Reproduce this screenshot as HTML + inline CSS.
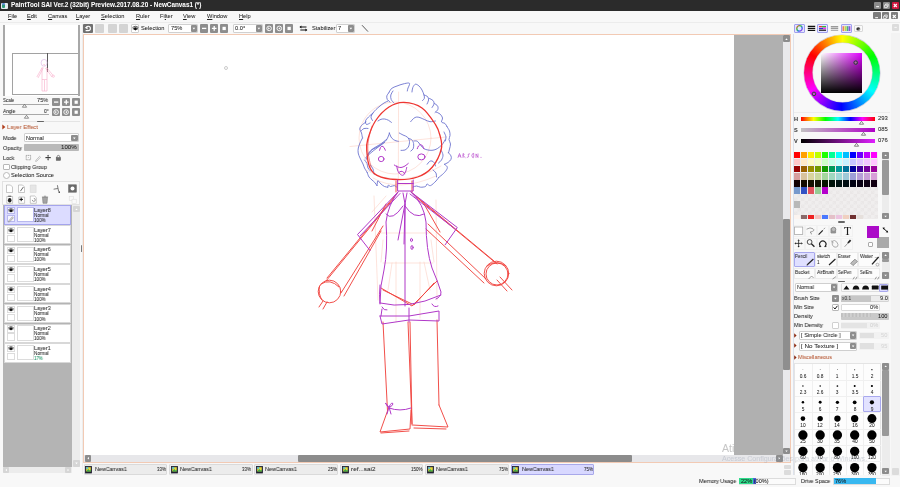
<!DOCTYPE html>
<html><head><meta charset="utf-8"><title>PaintTool SAI</title>
<style>
*{box-sizing:border-box;margin:0;padding:0}
html,body{width:900px;height:487px;overflow:hidden;background:#f8f8f8;font-family:"Liberation Sans","DejaVu Sans",sans-serif;font-size:5.7px;color:#222}
.a{position:absolute}
.t{position:absolute;white-space:nowrap;line-height:1;will-change:transform;-webkit-text-stroke:.04px currentColor}
.gb{position:absolute;background:#8d8d8d;border-radius:1px}
.lb{position:absolute;background:#d4d4d4;border-radius:1px}
svg{overflow:visible}
u{text-decoration-thickness:.5px;text-underline-offset:.6px}
</style></head><body>
<div class="a" style="left:0px;top:0px;width:900px;height:10.6px;background:#2b2b2b;"></div>
<div class="a" style="left:1.2px;top:2.8px;width:6.8px;height:6px;background:#e4ecf0;border-radius:1px"></div>
<div class="a" style="left:2px;top:4.2px;width:2.6px;height:3.6px;background:#2e9a7a;border-radius:1px"></div>
<div class="a" style="left:2.2px;top:3.3px;width:3px;height:1.4px;background:#5a8ad0;border-radius:1px"></div>
<div class="t" style="left:10.8px;top:2.3px;font-size:6.35px;font-weight:bold;color:#fff">PaintTool SAI Ver.2 (32bit) Preview.2017.08.20 - NewCanvas1 (*)</div>
<div class="a" style="left:874px;top:1.5px;width:7.2px;height:7.4px;background:#8a8a8a;border-radius:1px"></div>
<div class="a" style="left:883px;top:1.5px;width:7.2px;height:7.4px;background:#8a8a8a;border-radius:1px"></div>
<div class="a" style="left:892px;top:1.5px;width:7.2px;height:7.4px;background:#cf1840;border-radius:1px"></div>
<svg class="a" style="left:874px;top:2px;" width="25" height="7" viewBox="0 0 25 7"><path d="M2.200 4.700h2.800" stroke="#fff" stroke-width="1" fill="none"/><path d="M10.600 3.200h2.600v2.400h-2.600z M11.600 3v-1h2.600v2.400h-1" stroke="#fff" stroke-width=".7" fill="none"/><path d="M19.800 2l3 3M22.800 2l-3 3" stroke="#fff" stroke-width="1.100" fill="none"/></svg>
<div class="a" style="left:0px;top:10.6px;width:900px;height:12.4px;background:#f8f8f8;"></div>
<div class="a" style="left:0px;top:22px;width:900px;height:1px;background:#ececec;"></div>
<div class="t" style="left:8px;top:14px;"><u>F</u>ile</div>
<div class="t" style="left:27px;top:14px;"><u>E</u>dit</div>
<div class="t" style="left:48px;top:14px;"><u>C</u>anvas</div>
<div class="t" style="left:76px;top:14px;"><u>L</u>ayer</div>
<div class="t" style="left:101px;top:14px;"><u>S</u>election</div>
<div class="t" style="left:136px;top:14px;"><u>R</u>uler</div>
<div class="t" style="left:160px;top:14px;">Fi<u>l</u>ter</div>
<div class="t" style="left:183px;top:14px;"><u>V</u>iew</div>
<div class="t" style="left:207px;top:14px;"><u>W</u>indow</div>
<div class="t" style="left:239px;top:14px;"><u>H</u>elp</div>
<div class="a" style="left:873.3px;top:12.3px;width:7.3px;height:7.2px;background:#7c7c7c;border-radius:1px"></div>
<div class="a" style="left:882.1999999999999px;top:12.3px;width:7.3px;height:7.2px;background:#7c7c7c;border-radius:1px"></div>
<div class="a" style="left:891.0999999999999px;top:12.3px;width:7.3px;height:7.2px;background:#7c7c7c;border-radius:1px"></div>
<svg class="a" style="left:873.4px;top:12.5px;" width="25" height="7" viewBox="0 0 25 7"><path d="M2.200 4.700h2.800" stroke="#fff" stroke-width="1" fill="none"/><path d="M10.600 3.200h2.600v2.400h-2.600z M11.600 3v-1h2.600v2.400h-1" stroke="#fff" stroke-width=".7" fill="none"/><path d="M19.800 2l3 3M22.800 2l-3 3" stroke="#fff" stroke-width="1.100" fill="none"/></svg>
<div class="a" style="left:3px;top:25px;width:77px;height:71.3px;background:#ffffff;"></div>
<div class="a" style="left:3px;top:25px;width:1.6px;height:71.3px;background:#a8a8a8;"></div>
<div class="a" style="left:77.6px;top:25px;width:2px;height:71.3px;background:#a8a8a8;"></div>
<div class="a" style="left:12.3px;top:53px;width:66px;height:42px;background:transparent;border:.8px solid #a2a2a2;border-right:none"></div>
<div class="a" style="left:47.1px;top:53px;width:0.9px;height:19px;background:#5a5a5a;"></div>
<svg class="a" style="left:30px;top:55px;" width="30" height="40" viewBox="0 0 30 40"><g fill="none" stroke="#f8a4c4" stroke-width=".55"><ellipse cx="14.100" cy="7.800" rx="3" ry="3.400" stroke="#d4a8e0"/><path d="M12.600 11.800L6.800 22M13.400 12.600L8 23M16 11.800l7 8.500M15.400 13l6.600 9M12 13v23M17 13v23M12 24.500h5M12 36h5M14.500 25v11" /><circle cx="23.300" cy="21.200" r="1.100"/><path d="M13.600 9.500q.6 1 1.200 0" stroke="#f26a8a"/></g></svg>
<div class="t" style="left:3px;top:98px;font-size:5.7px;transform:scaleX(0.792);transform-origin:0 0;">Scale</div>
<div class="t" style="left:37.4px;top:98px;font-size:5.7px;transform:scaleX(0.973);transform-origin:0 0;">75%</div>
<div class="a" style="left:3px;top:103.7px;width:45.5px;height:0.8px;background:#a8a8a8;"></div>
<svg class="a" style="left:21.5px;top:104.3px;" width="5" height="3.5" viewBox="0 0 5 3.5"><path d="M2.5 .3L4.6 3.2H.4z" fill="#fff" stroke="#444" stroke-width=".6"/></svg>
<div class="t" style="left:3px;top:108.6px;font-size:5.7px;transform:scaleX(0.844);transform-origin:0 0;">Angle</div>
<div class="t" style="left:43.8px;top:108.6px;font-size:5.7px;transform:scaleX(0.862);transform-origin:0 0;">0&deg;</div>
<div class="a" style="left:3px;top:114.3px;width:45.5px;height:0.8px;background:#a8a8a8;"></div>
<svg class="a" style="left:23.5px;top:114.9px;" width="5" height="3.5" viewBox="0 0 5 3.5"><path d="M2.5 .3L4.6 3.2H.4z" fill="#fff" stroke="#444" stroke-width=".6"/></svg>
<div class="a" style="left:51.7px;top:97.5px;width:8.3px;height:8.2px;background:#8d8d8d;border-radius:1px"></div>
<div class="a" style="left:51.7px;top:108.2px;width:8.3px;height:8.2px;background:#8d8d8d;border-radius:1px"></div>
<div class="a" style="left:61.7px;top:97.5px;width:8.3px;height:8.2px;background:#8d8d8d;border-radius:1px"></div>
<div class="a" style="left:61.7px;top:108.2px;width:8.3px;height:8.2px;background:#8d8d8d;border-radius:1px"></div>
<div class="a" style="left:71.7px;top:97.5px;width:8.3px;height:8.2px;background:#8d8d8d;border-radius:1px"></div>
<div class="a" style="left:71.7px;top:108.2px;width:8.3px;height:8.2px;background:#8d8d8d;border-radius:1px"></div>
<svg class="a" style="left:51.7px;top:97.5px;" width="30" height="8.2" viewBox="0 0 30 8.2"><path d="M2 4.1h4.3" stroke="#fff" stroke-width="1.3"/><path d="M12 4.1h4.6M14.3 1.8v4.6" stroke="#fff" stroke-width="1.3"/><rect x="22.6" y="2.6" width="3.2" height="3.2" fill="#fff"/></svg>
<svg class="a" style="left:51.7px;top:108.2px;" width="30" height="8.2" viewBox="0 0 30 8.2"><circle cx="4.1" cy="4.1" r="2.3" fill="none" stroke="#fff" stroke-width=".9"/><path d="M3.2 3l1.8 1.1-1.8 1.1z" fill="#fff"/><circle cx="14.1" cy="4.1" r="2.3" fill="none" stroke="#fff" stroke-width=".9"/><path d="M15 3l-1.8 1.1 1.8 1.1z" fill="#fff"/><rect x="22.6" y="2.6" width="3.2" height="3.2" fill="#fff"/></svg>
<div class="a" style="left:2px;top:121.3px;width:78px;height:0.8px;background:#e4e4e4;"></div>
<div class="a" style="left:37px;top:120.8px;width:7px;height:1.5px;background:#666;border-radius:1px"></div>
<svg class="a" style="left:2px;top:124px;" width="4" height="6" viewBox="0 0 4 6"><path d="M.3 .5L3.4 3 .3 5.5z" fill="#b03a18"/></svg>
<div class="t" style="left:6.8px;top:123.6px;font-size:6.2px;transform:scaleX(0.940);transform-origin:0 0;color:#b5542f">Layer Effect</div>
<div class="t" style="left:3px;top:135.5px;font-size:5.7px;transform:scaleX(0.947);transform-origin:0 0;">Mode</div>
<div class="a" style="left:24.2px;top:133.3px;width:54.4px;height:9px;background:#fff;border:1px solid #d0d0d0;border-radius:1px"></div>
<div class="t" style="left:26.1px;top:135.8px;font-size:5.2px;transform:scaleX(1.068);transform-origin:0 0;">Normal</div>
<div class="a" style="left:71px;top:134.6px;width:6.6px;height:6.5px;background:#8d8d8d;border-radius:1px"></div>
<svg class="a" style="left:71px;top:134.6px;" width="6.6" height="6.5" viewBox="0 0 6.6 6.5"><path d="M2 2.5h2.6L3.3 4.3z" fill="#fff"/></svg>
<div class="t" style="left:3px;top:145.5px;font-size:5.7px;transform:scaleX(0.968);transform-origin:0 0;">Opacity</div>
<div class="a" style="left:24px;top:144px;width:54.5px;height:7.2px;background:#b9b9b9;border-radius:1px"></div>
<div class="t" style="left:61px;top:145.3px;font-size:5.7px;transform:scaleX(1.084);transform-origin:0 0;">100%</div>
<div class="t" style="left:3px;top:155.5px;font-size:5.7px;transform:scaleX(0.939);transform-origin:0 0;">Lock</div>
<svg class="a" style="left:25px;top:154px;" width="40" height="8" viewBox="0 0 40 8"><g fill="none" stroke="#8c8c8c" stroke-width=".75"><rect x="1.200" y="1.400" width="4.400" height="4.400" stroke-dasharray="1.300 .500"/><circle cx="3.400" cy="3.600" r=".500" fill="#bbb" stroke="none"/><path d="M11 6.200l3.600-3.900.900.900-3.600 3.900-1.300.300z" stroke="#a0a0a0" stroke-width=".6"/><path d="M20.400 3.600h5.400" stroke="#3c3c3c" stroke-width="1.150"/><path d="M23.100 1.300v4.800" stroke="#3c3c3c" stroke-width=".8"/><path d="M23.100 .700l.900 1.100h-1.800zM23.100 6.600l.900-1.100h-1.800z" fill="#3c3c3c" stroke="none"/><rect x="31.200" y="3.500" width="4.400" height="2.900" fill="#6c6c6c" stroke="#5a5a5a" stroke-width=".5"/><path d="M32.100 3.500v-.800a1.300 1.300 0 012.600 0v.800" stroke="#5a5a5a" stroke-width=".7"/></g></svg>
<div class="a" style="left:3px;top:163.8px;width:6.5px;height:6.5px;background:#fff;border:1px solid #b8b8b8;border-radius:1px"></div>
<div class="t" style="left:11.2px;top:165.1px;font-size:5.7px;transform:scaleX(0.949);transform-origin:0 0;">Clipping Group</div>
<div class="a" style="left:3px;top:172.3px;width:7px;height:7px;background:#fff;border:1px solid #b8b8b8;border-radius:50%"></div>
<div class="t" style="left:11.2px;top:173.1px;font-size:5.7px;transform:scaleX(0.998);transform-origin:0 0;">Selection Source</div>
<div class="a" style="left:1.5px;top:180.5px;width:78.5px;height:24.5px;background:#fafafa;border:1px solid #e2e2e2"></div>
<svg class="a" style="left:5px;top:184px;" width="74" height="20" viewBox="0 0 74 20"><g fill="none" stroke="#9a9a9a" stroke-width=".55">
<path d="M1.5 1h4l2 2v5.500h-6z" fill="#fff"/>
<path d="M13.500 1h4l2 2v5.500h-6z" fill="#fff"/><path d="M15.400 7.200l3-4.200" stroke="#444" stroke-width=".8"/>
<path d="M25.300 1h5.800v7.500h-5.800z" fill="#e6e6e6" stroke="#d4d4d4"/>
<path d="M48.600 5.200l4.200-.7M52.400 1.200l1.200 6.200" stroke="#444" stroke-width=".7"/><rect x="53.600" y="7.500" width="1.300" height="1.300" fill="#111" stroke="none"/>
<rect x="63.600" y=".800" width="7.800" height="7.400" fill="#6a6a6a" stroke="#666"/><circle cx="67.500" cy="4.500" r="2" fill="#fff" stroke="none"/>
<path d="M1.800 12.500h5.800v6.800h-5.800z" fill="#fff"/><ellipse cx="4.700" cy="16.200" rx="1.800" ry="2.200" fill="#222" stroke="none"/><path d="M3.200 12.200h3" stroke="#333" stroke-width=".8"/>
<path d="M13.800 13h5.800v6.300h-5.800z" fill="#fff"/><path d="M16.200 13.600v3.600M14.400 15.400h3.600" stroke="#111" stroke-width="1"/>
<path d="M25.300 12h4.400l1.600 1.600v5.700h-6z" fill="#fff"/><path d="M28.800 14.400a1.500 1.500 0 11-1.500 1.500" stroke="#555"/>
<path d="M37.500 13.400h5l-.5 5.900h-4z" fill="#a4a4a4" stroke="#777"/><path d="M36.900 13h6.200M38.900 12.200h2.200" stroke="#666"/>
<rect x="64.200" y="12.400" width="4.200" height="4.200" stroke="#dcdcdc"/><rect x="67" y="15.200" width="4.200" height="4.200" stroke="#dcdcdc" fill="#fafafa"/>
</g></svg>
<div class="a" style="left:2.5px;top:205px;width:69px;height:261.5px;background:#b4b4b4;"></div>
<div class="a" style="left:4px;top:205.3px;width:66.6px;height:19.4px;background:#dcdcff;border:1px solid #a4a4ec"></div>
<div class="a" style="left:7px;top:207.10000000000002px;width:8px;height:7.3px;background:#f4f4ff;border:1px solid #b8b8ee"></div>
<div class="a" style="left:7px;top:215.20000000000002px;width:8px;height:7.3px;background:#f4f4ff;border:1px solid #b8b8ee"></div>
<svg class="a" style="left:7px;top:207.10000000000002px;" width="8" height="7.3" viewBox="0 0 8 7.3"><path d="M1.6 3.8Q4 1.6 6.4 3.8Q4 6 1.6 3.8z" fill="#fff" stroke="#222" stroke-width=".6"/><circle cx="4" cy="3.8" r="1.3" fill="#111"/><path d="M1.4 2.6Q4 .6 6.6 2.6" fill="none" stroke="#222" stroke-width=".7"/></svg>
<svg class="a" style="left:7px;top:215.20000000000002px;" width="8" height="7.3" viewBox="0 0 8 7.3"><path d="M1.8 5.8l3.6-4 1 .9-3.6 4-1.3.4z" fill="#ddd" stroke="#777" stroke-width=".5"/></svg>
<div class="a" style="left:17px;top:207.10000000000002px;width:16.5px;height:15.4px;background:#fff;border:1px solid #b8b8ee"></div>
<div class="t" style="left:34.2px;top:207.8px;font-size:5.9px;transform:scaleX(0.926);transform-origin:0 0;">Layer8</div>
<div class="t" style="left:34.2px;top:213.9px;font-size:4.7px;transform:scaleX(0.964);transform-origin:0 0;">Normal</div>
<div class="t" style="left:34.2px;top:219.0px;font-size:4.7px;transform:scaleX(0.965);transform-origin:0 0;">100%</div>
<div class="a" style="left:4px;top:225.0px;width:66.6px;height:19.4px;background:#ffffff;border:1px solid #d8d8d8"></div>
<div class="a" style="left:7px;top:226.8px;width:8px;height:7.3px;background:#fff;border:1px solid #dcdcdc"></div>
<div class="a" style="left:7px;top:234.9px;width:8px;height:7.3px;background:#fff;border:1px solid #dcdcdc"></div>
<svg class="a" style="left:7px;top:226.8px;" width="8" height="7.3" viewBox="0 0 8 7.3"><path d="M1.6 3.8Q4 1.6 6.4 3.8Q4 6 1.6 3.8z" fill="#fff" stroke="#222" stroke-width=".6"/><circle cx="4" cy="3.8" r="1.3" fill="#111"/><path d="M1.4 2.6Q4 .6 6.6 2.6" fill="none" stroke="#222" stroke-width=".7"/></svg>
<div class="a" style="left:17px;top:226.8px;width:16.5px;height:15.4px;background:#fff;border:1px solid #dcdcdc"></div>
<div class="t" style="left:34.2px;top:227.5px;font-size:5.9px;transform:scaleX(0.926);transform-origin:0 0;">Layer7</div>
<div class="t" style="left:34.2px;top:233.6px;font-size:4.7px;transform:scaleX(0.964);transform-origin:0 0;">Normal</div>
<div class="t" style="left:34.2px;top:238.7px;font-size:4.7px;transform:scaleX(0.965);transform-origin:0 0;">100%</div>
<div class="a" style="left:4px;top:244.70000000000002px;width:66.6px;height:19.4px;background:#ffffff;border:1px solid #d8d8d8"></div>
<div class="a" style="left:7px;top:246.50000000000003px;width:8px;height:7.3px;background:#fff;border:1px solid #dcdcdc"></div>
<div class="a" style="left:7px;top:254.60000000000002px;width:8px;height:7.3px;background:#fff;border:1px solid #dcdcdc"></div>
<svg class="a" style="left:7px;top:246.50000000000003px;" width="8" height="7.3" viewBox="0 0 8 7.3"><path d="M1.6 3.8Q4 1.6 6.4 3.8Q4 6 1.6 3.8z" fill="#fff" stroke="#222" stroke-width=".6"/><circle cx="4" cy="3.8" r="1.3" fill="#111"/><path d="M1.4 2.6Q4 .6 6.6 2.6" fill="none" stroke="#222" stroke-width=".7"/></svg>
<div class="a" style="left:17px;top:246.50000000000003px;width:16.5px;height:15.4px;background:#fff;border:1px solid #dcdcdc"></div>
<div class="t" style="left:34.2px;top:247.20000000000002px;font-size:5.9px;transform:scaleX(0.926);transform-origin:0 0;">Layer6</div>
<div class="t" style="left:34.2px;top:253.3px;font-size:4.7px;transform:scaleX(0.964);transform-origin:0 0;">Normal</div>
<div class="t" style="left:34.2px;top:258.40000000000003px;font-size:4.7px;transform:scaleX(0.965);transform-origin:0 0;">100%</div>
<div class="a" style="left:4px;top:264.4px;width:66.6px;height:19.4px;background:#ffffff;border:1px solid #d8d8d8"></div>
<div class="a" style="left:7px;top:266.2px;width:8px;height:7.3px;background:#fff;border:1px solid #dcdcdc"></div>
<div class="a" style="left:7px;top:274.29999999999995px;width:8px;height:7.3px;background:#fff;border:1px solid #dcdcdc"></div>
<svg class="a" style="left:7px;top:266.2px;" width="8" height="7.3" viewBox="0 0 8 7.3"><path d="M1.6 3.8Q4 1.6 6.4 3.8Q4 6 1.6 3.8z" fill="#fff" stroke="#222" stroke-width=".6"/><circle cx="4" cy="3.8" r="1.3" fill="#111"/><path d="M1.4 2.6Q4 .6 6.6 2.6" fill="none" stroke="#222" stroke-width=".7"/></svg>
<div class="a" style="left:17px;top:266.2px;width:16.5px;height:15.4px;background:#fff;border:1px solid #dcdcdc"></div>
<div class="t" style="left:34.2px;top:266.9px;font-size:5.9px;transform:scaleX(0.926);transform-origin:0 0;">Layer5</div>
<div class="t" style="left:34.2px;top:273.0px;font-size:4.7px;transform:scaleX(0.964);transform-origin:0 0;">Normal</div>
<div class="t" style="left:34.2px;top:278.09999999999997px;font-size:4.7px;transform:scaleX(0.965);transform-origin:0 0;">100%</div>
<div class="a" style="left:4px;top:284.1px;width:66.6px;height:19.4px;background:#ffffff;border:1px solid #d8d8d8"></div>
<div class="a" style="left:7px;top:285.90000000000003px;width:8px;height:7.3px;background:#fff;border:1px solid #dcdcdc"></div>
<div class="a" style="left:7px;top:294.0px;width:8px;height:7.3px;background:#fff;border:1px solid #dcdcdc"></div>
<svg class="a" style="left:7px;top:285.90000000000003px;" width="8" height="7.3" viewBox="0 0 8 7.3"><path d="M1.6 3.8Q4 1.6 6.4 3.8Q4 6 1.6 3.8z" fill="#fff" stroke="#222" stroke-width=".6"/><circle cx="4" cy="3.8" r="1.3" fill="#111"/><path d="M1.4 2.6Q4 .6 6.6 2.6" fill="none" stroke="#222" stroke-width=".7"/></svg>
<div class="a" style="left:17px;top:285.90000000000003px;width:16.5px;height:15.4px;background:#fff;border:1px solid #dcdcdc"></div>
<div class="t" style="left:34.2px;top:286.6px;font-size:5.9px;transform:scaleX(0.926);transform-origin:0 0;">Layer4</div>
<div class="t" style="left:34.2px;top:292.70000000000005px;font-size:4.7px;transform:scaleX(0.964);transform-origin:0 0;">Normal</div>
<div class="t" style="left:34.2px;top:297.8px;font-size:4.7px;transform:scaleX(0.965);transform-origin:0 0;">100%</div>
<div class="a" style="left:4px;top:303.8px;width:66.6px;height:19.4px;background:#ffffff;border:1px solid #d8d8d8"></div>
<div class="a" style="left:7px;top:305.6px;width:8px;height:7.3px;background:#fff;border:1px solid #dcdcdc"></div>
<div class="a" style="left:7px;top:313.7px;width:8px;height:7.3px;background:#fff;border:1px solid #dcdcdc"></div>
<svg class="a" style="left:7px;top:305.6px;" width="8" height="7.3" viewBox="0 0 8 7.3"><path d="M1.6 3.8Q4 1.6 6.4 3.8Q4 6 1.6 3.8z" fill="#fff" stroke="#222" stroke-width=".6"/><circle cx="4" cy="3.8" r="1.3" fill="#111"/><path d="M1.4 2.6Q4 .6 6.6 2.6" fill="none" stroke="#222" stroke-width=".7"/></svg>
<div class="a" style="left:17px;top:305.6px;width:16.5px;height:15.4px;background:#fff;border:1px solid #dcdcdc"></div>
<div class="t" style="left:34.2px;top:306.3px;font-size:5.9px;transform:scaleX(0.926);transform-origin:0 0;">Layer3</div>
<div class="t" style="left:34.2px;top:312.40000000000003px;font-size:4.7px;transform:scaleX(0.964);transform-origin:0 0;">Normal</div>
<div class="t" style="left:34.2px;top:317.5px;font-size:4.7px;transform:scaleX(0.965);transform-origin:0 0;">100%</div>
<div class="a" style="left:4px;top:323.5px;width:66.6px;height:19.4px;background:#ffffff;border:1px solid #d8d8d8"></div>
<div class="a" style="left:7px;top:325.3px;width:8px;height:7.3px;background:#fff;border:1px solid #dcdcdc"></div>
<div class="a" style="left:7px;top:333.4px;width:8px;height:7.3px;background:#fff;border:1px solid #dcdcdc"></div>
<svg class="a" style="left:7px;top:325.3px;" width="8" height="7.3" viewBox="0 0 8 7.3"><path d="M1.6 3.8Q4 1.6 6.4 3.8Q4 6 1.6 3.8z" fill="#fff" stroke="#222" stroke-width=".6"/><circle cx="4" cy="3.8" r="1.3" fill="#111"/><path d="M1.4 2.6Q4 .6 6.6 2.6" fill="none" stroke="#222" stroke-width=".7"/></svg>
<div class="a" style="left:17px;top:325.3px;width:16.5px;height:15.4px;background:#fff;border:1px solid #dcdcdc"></div>
<div class="t" style="left:34.2px;top:326.0px;font-size:5.9px;transform:scaleX(0.926);transform-origin:0 0;">Layer2</div>
<div class="t" style="left:34.2px;top:332.1px;font-size:4.7px;transform:scaleX(0.964);transform-origin:0 0;">Normal</div>
<div class="t" style="left:34.2px;top:337.2px;font-size:4.7px;transform:scaleX(0.965);transform-origin:0 0;">100%</div>
<div class="a" style="left:4px;top:343.20000000000005px;width:66.6px;height:19.4px;background:#ffffff;border:1px solid #d8d8d8"></div>
<div class="a" style="left:7px;top:345.00000000000006px;width:8px;height:7.3px;background:#fff;border:1px solid #dcdcdc"></div>
<div class="a" style="left:7px;top:353.1px;width:8px;height:7.3px;background:#fff;border:1px solid #dcdcdc"></div>
<svg class="a" style="left:7px;top:345.00000000000006px;" width="8" height="7.3" viewBox="0 0 8 7.3"><path d="M1.6 3.8Q4 1.6 6.4 3.8Q4 6 1.6 3.8z" fill="#fff" stroke="#222" stroke-width=".6"/><circle cx="4" cy="3.8" r="1.3" fill="#111"/><path d="M1.4 2.6Q4 .6 6.6 2.6" fill="none" stroke="#222" stroke-width=".7"/></svg>
<div class="a" style="left:17px;top:345.00000000000006px;width:16.5px;height:15.4px;background:#fff;border:1px solid #dcdcdc"></div>
<div class="t" style="left:34.2px;top:345.70000000000005px;font-size:5.9px;transform:scaleX(0.926);transform-origin:0 0;">Layer1</div>
<div class="t" style="left:34.2px;top:351.80000000000007px;font-size:4.7px;transform:scaleX(0.964);transform-origin:0 0;">Normal</div>
<div class="t" style="left:34.2px;top:356.90000000000003px;font-size:4.7px;transform:scaleX(0.914);transform-origin:0 0;color:#0e8a5a">17%</div>
<div class="a" style="left:72.3px;top:205px;width:7.5px;height:261.5px;background:#ececec;"></div>
<div class="a" style="left:72.5px;top:205.5px;width:7px;height:6.5px;background:#d6d6d6;border-radius:1px"></div>
<svg class="a" style="left:72.5px;top:205.5px;" width="7" height="6.5" viewBox="0 0 7 6.5"><path d="M2.3 4l1.2-1.6L4.7 4z" fill="#fff"/></svg>
<div class="a" style="left:72.5px;top:460px;width:7px;height:6.5px;background:#d6d6d6;border-radius:1px"></div>
<svg class="a" style="left:72.5px;top:460px;" width="7" height="6.5" viewBox="0 0 7 6.5"><path d="M2.3 2.6l1.2 1.6 1.2-1.6z" fill="#fff"/></svg>
<div class="a" style="left:2.5px;top:466.8px;width:69px;height:6.6px;background:#ececec;"></div>
<div class="a" style="left:2.8px;top:467px;width:6.5px;height:6.2px;background:#d6d6d6;border-radius:1px"></div>
<div class="a" style="left:64.5px;top:467px;width:6.5px;height:6.2px;background:#d6d6d6;border-radius:1px"></div>
<svg class="a" style="left:2.8px;top:467px;" width="6.5" height="6.2" viewBox="0 0 6.5 6.2"><path d="M4 1.9L2.4 3.1 4 4.3z" fill="#fff"/></svg>
<svg class="a" style="left:64.5px;top:467px;" width="6.5" height="6.2" viewBox="0 0 6.5 6.2"><path d="M2.5 1.9l1.6 1.2-1.6 1.2z" fill="#fff"/></svg>
<div class="a" style="left:81.6px;top:24px;width:0.8px;height:450px;background:#ececec;"></div>
<div class="a" style="left:81.1px;top:245.3px;width:1.4px;height:6.8px;background:#7a7a7a;border-radius:.6px"></div>
<div class="a" style="left:83.3px;top:24.2px;width:9.5px;height:8.8px;background:#707070;border-radius:1px"></div>
<svg class="a" style="left:83.3px;top:24.2px;" width="9.5" height="8.8" viewBox="0 0 9.5 8.8"><path d="M3 4.3a2.2 2.2 0 112.2 2.3H2.6" fill="none" stroke="#fff" stroke-width="1.1"/><path d="M1.6 3.2h3v2.4z" fill="#fff"/></svg>
<div class="a" style="left:95px;top:24.2px;width:9.4px;height:8.8px;background:#d4d4d4;border-radius:1px"></div>
<div class="a" style="left:107.8px;top:24.2px;width:9.4px;height:8.8px;background:#d4d4d4;border-radius:1px"></div>
<div class="a" style="left:118.8px;top:24.2px;width:9.4px;height:8.8px;background:#d4d4d4;border-radius:1px"></div>
<div class="a" style="left:130.5px;top:24.2px;width:8.8px;height:8.8px;background:#fff;border:1px solid #cfcfcf;border-radius:1px"></div>
<svg class="a" style="left:130.5px;top:24.2px;" width="8.8" height="8.8" viewBox="0 0 8.8 8.8"><path d="M1.8 4.8Q4.4 2.4 7 4.8Q4.4 7 1.8 4.8z" fill="#fff" stroke="#222" stroke-width=".6"/><circle cx="4.4" cy="4.8" r="1.4" fill="#111"/><path d="M1.5 3.4Q4.4 1.2 7.3 3.4" fill="none" stroke="#222" stroke-width=".8"/></svg>
<div class="t" style="left:140.8px;top:25.8px;">Selection</div>
<div class="a" style="left:168.3px;top:24.2px;width:29.6px;height:8.8px;background:#fff;border:1px solid #d0d0d0;border-radius:1px"></div>
<div class="t" style="left:170.5px;top:25.8px;">75%</div>
<div class="a" style="left:191.3px;top:25.2px;width:5.8px;height:6.8px;background:#8d8d8d;border-radius:1px"></div>
<svg class="a" style="left:191.3px;top:25.2px;" width="5.8" height="6.8" viewBox="0 0 5.8 6.8"><path d="M1.6 2.7h2.6L2.9 4.5z" fill="#fff"/></svg>
<div class="a" style="left:200px;top:24.2px;width:8.3px;height:8.8px;background:#8d8d8d;border-radius:1px"></div>
<div class="a" style="left:210px;top:24.2px;width:8.3px;height:8.8px;background:#8d8d8d;border-radius:1px"></div>
<div class="a" style="left:220px;top:24.2px;width:8.3px;height:8.8px;background:#8d8d8d;border-radius:1px"></div>
<svg class="a" style="left:200px;top:24.2px;" width="30" height="8.8" viewBox="0 0 30 8.8"><path d="M2 4.4h4.3" stroke="#fff" stroke-width="1.3"/><path d="M11.9 4.4h4.6M14.2 2.1v4.6" stroke="#fff" stroke-width="1.3"/><rect x="22.5" y="2.8" width="3.3" height="3.3" fill="#fff"/></svg>
<div class="a" style="left:232.5px;top:24.2px;width:30px;height:8.8px;background:#fff;border:1px solid #d0d0d0;border-radius:1px"></div>
<div class="t" style="left:234.7px;top:25.8px;">0.0&deg;</div>
<div class="a" style="left:255.9px;top:25.2px;width:5.8px;height:6.8px;background:#8d8d8d;border-radius:1px"></div>
<svg class="a" style="left:255.9px;top:25.2px;" width="5.8" height="6.8" viewBox="0 0 5.8 6.8"><path d="M1.6 2.7h2.6L2.9 4.5z" fill="#fff"/></svg>
<div class="a" style="left:265px;top:24.2px;width:8.3px;height:8.8px;background:#8d8d8d;border-radius:1px"></div>
<div class="a" style="left:275.2px;top:24.2px;width:8.3px;height:8.8px;background:#8d8d8d;border-radius:1px"></div>
<div class="a" style="left:285px;top:24.2px;width:8.3px;height:8.8px;background:#8d8d8d;border-radius:1px"></div>
<svg class="a" style="left:265px;top:24.2px;" width="30" height="8.8" viewBox="0 0 30 8.8"><circle cx="4.1" cy="4.4" r="2.3" fill="none" stroke="#fff" stroke-width=".9"/><path d="M3.2 3.3l1.8 1.1-1.8 1.1z" fill="#fff"/><circle cx="14.3" cy="4.4" r="2.3" fill="none" stroke="#fff" stroke-width=".9"/><path d="M15.2 3.3l-1.8 1.1 1.8 1.1z" fill="#fff"/><rect x="22.5" y="2.8" width="3.3" height="3.3" fill="#fff"/></svg>
<svg class="a" style="left:298.5px;top:24.2px;" width="9" height="8.8" viewBox="0 0 9 8.8"><path d="M1.3 3h6.2M1.3 6h6.2" stroke="#111" stroke-width="1.1"/><path d="M.4 3l2-1.6v3.2zM8.4 6l-2-1.6v3.2z" fill="#111"/></svg>
<div class="t" style="left:311.7px;top:25.8px;">Stabilizer</div>
<div class="a" style="left:335.5px;top:24.2px;width:19.5px;height:8.8px;background:#fff;border:1px solid #d0d0d0;border-radius:1px"></div>
<div class="t" style="left:337.7px;top:25.8px;">7</div>
<div class="a" style="left:348.4px;top:25.2px;width:5.8px;height:6.8px;background:#8d8d8d;border-radius:1px"></div>
<svg class="a" style="left:348.4px;top:25.2px;" width="5.8" height="6.8" viewBox="0 0 5.8 6.8"><path d="M1.6 2.7h2.6L2.9 4.5z" fill="#fff"/></svg>
<svg class="a" style="left:361px;top:24.2px;" width="8" height="8.8" viewBox="0 0 8 8.8"><path d="M1 1.2l6 6.4" stroke="#333" stroke-width=".8"/></svg>
<div class="a" style="left:83px;top:34px;width:708px;height:429px;background:#ffffff;border:1px solid #f2cab4"></div>
<div class="a" style="left:734px;top:35px;width:49px;height:419.5px;background:#b0b0b0;"></div>
<div class="a" style="left:783px;top:35px;width:7px;height:427px;background:#e9e9eb;"></div>
<div class="a" style="left:783.2px;top:35.3px;width:6.6px;height:6.4px;background:#8d8d8d;border-radius:1px"></div>
<svg class="a" style="left:783.2px;top:35.5px;" width="7" height="6.4" viewBox="0 0 7 6.4"><path d="M2.3 3.9l1.2-1.6 1.2 1.6z" fill="#fff"/></svg>
<div class="a" style="left:783.2px;top:448px;width:6.6px;height:6.3px;background:#8d8d8d;border-radius:1px"></div>
<svg class="a" style="left:783.2px;top:448px;" width="7" height="6.4" viewBox="0 0 7 6.4"><path d="M2.3 2.5l1.2 1.6 1.2-1.6z" fill="#fff"/></svg>
<div class="a" style="left:783.2px;top:219.1px;width:6.7px;height:150.5px;background:#8e8e8e;border-radius:1px"></div>
<div class="a" style="left:84px;top:454.6px;width:699px;height:7.4px;background:#e7e7ea;"></div>
<div class="a" style="left:84.5px;top:455.3px;width:6.6px;height:6.4px;background:#8d8d8d;border-radius:1px"></div>
<svg class="a" style="left:84.5px;top:455.3px;" width="6.6" height="6.4" viewBox="0 0 6.6 6.4"><path d="M4 2L2.4 3.2 4 4.4z" fill="#fff"/></svg>
<div class="a" style="left:776.2px;top:455.3px;width:6.6px;height:6.4px;background:#8d8d8d;border-radius:1px"></div>
<svg class="a" style="left:776.2px;top:455.3px;" width="6.6" height="6.4" viewBox="0 0 6.6 6.4"><path d="M2.6 2l1.6 1.2-1.6 1.2z" fill="#fff"/></svg>
<div class="a" style="left:298px;top:455.3px;width:334px;height:6.4px;background:#8c8c8c;border-radius:1px"></div>
<div class="a" style="left:784px;top:464.5px;width:6.5px;height:4.8px;background:#dcdcdc;border-radius:1px"></div>
<div class="a" style="left:784px;top:470.3px;width:6.5px;height:4.8px;background:#dcdcdc;border-radius:1px"></div>
<svg class="a" style="left:0;top:0" width="900" height="487" viewBox="0 0 900 487" fill="none" stroke-linecap="round" stroke-linejoin="round">
<g stroke="#fbd0c4" stroke-width=".6">
<circle cx="395" cy="138" r="36"/>
<path d="M398.600 92L398.300 184M350 146.500L446 137M366 170Q400 190 441 166M373 178Q398 193 436 176"/>
<path d="M374 196L378 300M436 200L437 300M381 233h50M383 263h50M392 263L388 290M424 262L430 290M372 212l14-16"/>
<path d="M396 262v60M420 262v56M383 240L381 262M431 240L434 262"/>
</g>
<g stroke="#646ccc" stroke-width=".85">
<path d="M388.7 93.0C389.2 92.2 390.1 89.7 391.5 88.5C392.9 87.3 395.1 86.8 397.0 86.0C398.9 85.2 401.1 84.5 403.0 84.0C404.9 83.5 407.6 82.9 408.7 83.0C409.8 83.1 409.6 83.7 409.5 84.5C409.4 85.3 408.4 86.9 408.0 88.0C407.6 89.1 407.4 90.5 407.3 91.0"/>
<path d="M412.0 92.0C412.1 91.2 412.2 88.8 412.8 87.5C413.4 86.2 414.4 84.5 415.4 84.2C416.4 84.0 417.9 85.0 419.0 86.0C420.1 87.0 421.2 88.5 422.0 90.0C422.8 91.5 423.6 93.6 424.0 95.0C424.4 96.4 424.6 97.6 424.3 98.5C424.1 99.4 422.8 100.2 422.5 100.5"/>
<path d="M388.7 93.0C388.4 93.5 387.0 94.9 386.8 96.0C386.6 97.1 386.8 98.5 387.3 99.5C387.8 100.5 389.6 101.6 390.0 102.0"/>
<path d="M393.0 91.0C392.6 91.7 391.1 93.6 390.8 95.0C390.5 96.4 390.7 98.2 391.2 99.5C391.7 100.8 393.5 102.4 394.0 103.0"/>
<path d="M424.0 95.0C424.6 95.2 426.7 95.7 427.5 96.5C428.3 97.3 428.7 98.8 428.6 100.0C428.5 101.2 427.3 103.3 427.0 104.0"/>
<path d="M429.5 98.5C430.1 98.8 432.2 99.6 433.0 100.5C433.8 101.4 434.2 102.8 434.0 104.0C433.8 105.2 432.3 106.9 432.0 107.5"/>
<path d="M434.5 103.5C435.0 103.9 437.1 105.0 437.6 106.0C438.2 107.0 438.2 108.4 437.8 109.5C437.4 110.6 435.5 112.0 435.0 112.5"/>
<path d="M388.0 101.0C387.3 101.3 385.3 102.2 384.0 103.0C382.7 103.8 381.3 104.9 380.0 106.0C378.7 107.1 377.2 108.3 376.0 109.5C374.8 110.7 373.8 111.8 373.0 113.0C372.2 114.2 371.1 115.8 371.0 117.0C370.9 118.2 372.2 119.9 372.5 120.5"/>
<path d="M373.0 113.0C372.2 113.7 369.8 115.7 368.5 117.0C367.2 118.3 365.8 119.8 365.5 121.0C365.2 122.2 365.8 124.2 366.5 124.5C367.2 124.8 369.4 123.2 370.0 123.0"/>
<path d="M366.0 122.0C365.2 122.6 362.5 124.3 361.5 125.5C360.5 126.7 359.8 127.8 359.8 129.0C359.8 130.2 361.1 131.5 361.5 133.0C361.9 134.5 362.3 137.2 362.5 138.0"/>
<path d="M362.5 138.0C362.1 138.8 360.7 141.3 360.0 143.0C359.3 144.7 358.6 146.3 358.3 148.0C358.0 149.7 357.9 151.3 358.2 153.0C358.5 154.7 359.2 156.2 360.0 158.0C360.8 159.8 362.2 162.3 363.0 164.0C363.8 165.7 363.8 166.6 364.5 168.0C365.2 169.4 366.8 171.8 367.2 172.5"/>
<path d="M361.0 131.0C361.5 130.6 362.8 128.9 364.0 128.5C365.2 128.1 367.3 128.5 368.0 128.5"/>
<path d="M367.2 172.5C367.5 173.2 368.2 175.8 369.0 177.0C369.8 178.2 371.1 179.1 372.0 180.0C372.9 180.9 373.8 181.4 374.6 182.3C375.4 183.2 376.6 185.1 377.0 185.6"/>
<path d="M377.0 185.6C377.1 185.2 377.1 183.8 377.3 183.0C377.5 182.2 377.4 180.5 378.0 180.7C378.6 180.9 379.9 183.0 381.0 184.0C382.1 185.0 383.4 186.0 384.5 186.5C385.6 187.0 387.2 187.1 387.8 187.2"/>
<path d="M387.8 187.2C387.9 186.8 388.1 185.1 388.5 185.0C388.9 184.9 389.5 186.4 390.5 186.5C391.5 186.6 393.3 185.5 394.3 185.6C395.3 185.7 396.1 186.8 396.5 187.0"/>
<path d="M364.5 160.0C364.9 160.6 366.4 162.2 367.0 163.5C367.6 164.8 367.4 166.8 368.0 168.0C368.6 169.2 370.1 170.5 370.5 171.0"/>
<path d="M370.5 165.0C370.9 165.7 372.4 167.5 373.0 169.0C373.6 170.5 373.8 173.2 374.0 174.0"/>
<path d="M436.0 112.0C436.7 112.3 438.9 113.0 440.0 114.0C441.1 115.0 442.2 116.7 442.5 118.0C442.8 119.3 441.1 121.1 441.5 122.0C441.9 122.9 444.1 122.8 445.0 123.5C445.9 124.2 446.6 126.0 446.9 126.5"/>
<path d="M446.9 126.5C447.3 127.2 449.0 129.5 449.5 131.0C450.0 132.5 450.1 134.1 450.0 135.5C449.9 136.9 448.9 138.2 449.0 139.6C449.1 141.0 450.4 142.4 450.5 144.0C450.6 145.6 449.8 147.5 449.5 149.0C449.2 150.5 448.7 152.2 448.5 152.8"/>
<path d="M448.5 152.8C448.9 153.3 450.6 154.9 451.0 156.0C451.4 157.1 451.5 158.2 451.0 159.3C450.5 160.4 449.1 161.7 448.0 162.5C446.9 163.3 445.0 164.0 444.4 164.3"/>
<path d="M444.4 164.3C444.8 164.7 446.6 165.7 447.0 166.5C447.4 167.3 447.5 168.0 446.9 169.2C446.3 170.4 444.9 172.1 443.5 173.5C442.1 174.9 439.5 176.8 438.7 177.4"/>
<path d="M438.7 177.4C438.2 178.0 437.4 179.6 436.0 181.0C434.6 182.4 432.0 185.1 430.5 185.6C429.0 186.1 427.8 183.8 427.0 184.0C426.2 184.2 426.6 186.0 425.5 186.5C424.4 187.0 422.1 187.3 420.6 187.2C419.1 187.1 417.8 186.0 416.5 186.0C415.2 186.0 413.6 186.8 413.0 187.0"/>
<path d="M441.0 150.0C441.3 150.8 442.9 153.3 443.0 155.0C443.1 156.7 442.2 158.7 441.5 160.0C440.8 161.3 439.0 162.5 438.5 163.0"/>
<path d="M427.2 164.3C427.6 163.8 428.7 162.1 429.5 161.5C430.3 160.9 431.2 160.8 432.0 161.0C432.8 161.2 433.9 162.2 434.5 163.0C435.1 163.8 435.2 165.5 435.4 166.0"/>
<path d="M433.0 170.0C433.5 170.5 435.4 171.8 436.0 173.0C436.6 174.2 436.4 176.3 436.5 177.0"/>
<path d="M444.0 132.0C444.3 132.8 445.8 135.5 446.0 137.0C446.2 138.5 445.3 140.3 445.2 141.0"/>
<path d="M378.0 121.0C378.5 120.7 379.9 119.6 381.0 119.3C382.1 119.0 383.4 118.8 384.7 119.0C385.9 119.2 387.4 119.7 388.5 120.3C389.6 120.9 390.9 122.1 391.4 122.4"/>
<path d="M410.7 121.7C411.2 121.2 412.5 119.3 413.5 118.5C414.5 117.7 415.6 117.1 416.8 117.0C418.1 116.9 419.7 117.5 421.0 118.0C422.3 118.5 423.3 119.1 424.8 119.7C426.3 120.3 428.2 121.5 430.0 121.7C431.8 121.9 434.5 121.1 435.4 121.0"/>
<path d="M389.4 133.0C389.2 133.7 388.7 135.6 388.0 137.0C387.3 138.4 386.8 139.8 385.3 141.3C383.8 142.8 381.3 144.5 379.0 146.0C376.7 147.5 373.1 148.8 371.3 150.3C369.5 151.8 368.8 153.5 368.0 155.0C367.2 156.5 366.7 158.6 366.4 159.3"/>
<path d="M386.5 139.5C385.4 140.3 382.3 142.9 380.0 144.5C377.7 146.1 374.6 147.3 372.5 149.0C370.4 150.7 368.3 153.6 367.5 154.5"/>
<path d="M384.5 142.5C383.2 143.4 379.4 146.2 377.0 148.0C374.6 149.8 371.9 151.8 370.0 153.5C368.1 155.2 366.2 157.2 365.5 158.0"/>
<path d="M389.4 133.0C389.7 133.7 390.3 135.9 391.0 137.0C391.7 138.1 392.7 139.0 393.5 139.6C394.3 140.2 395.2 140.5 396.0 140.8C396.8 141.1 398.0 141.2 398.4 141.3"/>
<path d="M399.3 133.0C399.9 133.3 401.6 134.3 403.0 135.0C404.4 135.7 406.4 136.1 407.5 137.2C408.6 138.3 409.4 139.9 409.5 141.5C409.6 143.1 409.1 145.6 408.3 147.0C407.6 148.4 406.2 149.4 405.0 150.0C403.8 150.6 401.7 150.2 401.0 150.3"/>
<path d="M408.5 138.5C409.0 138.7 410.8 138.8 411.6 139.6C412.5 140.4 413.3 142.0 413.6 143.5C413.9 145.0 413.7 147.4 413.2 148.7C412.7 149.9 411.2 150.6 410.8 151.0"/>
<path d="M414.0 141.0C414.6 141.1 416.2 140.6 417.3 141.3C418.4 142.0 419.4 143.8 420.5 145.0C421.6 146.2 422.6 147.9 423.9 148.7C425.1 149.5 426.6 149.7 428.0 150.0C429.4 150.3 430.7 150.4 432.0 150.3C433.3 150.2 434.8 149.9 436.0 149.3C437.2 148.8 438.3 148.0 439.5 147.0C440.7 146.0 442.1 144.7 443.0 143.5C443.9 142.3 444.8 140.2 445.2 139.6"/>
</g>
<path d="M404.0 102.4C398.5 102.2 393.8 103.9 389.0 107.0C384.2 110.1 379.0 115.5 375.4 121.0C371.8 126.5 369.0 135.0 367.6 140.0C366.2 145.0 366.5 146.5 366.8 151.0C367.1 155.5 367.9 162.9 369.6 167.0C371.3 171.1 372.7 173.2 377.0 175.3C381.3 177.4 388.7 179.2 395.5 179.5C402.3 179.8 411.5 179.1 417.6 177.0C423.8 174.9 428.4 171.7 432.4 167.0C436.3 162.3 440.0 154.2 441.3 149.0C442.6 143.8 441.0 139.6 440.0 135.5C439.0 131.4 438.4 129.0 435.4 124.4C432.4 119.8 427.2 111.7 422.0 108.0C416.8 104.3 409.5 102.6 404.0 102.4z" stroke="#ee3632" stroke-width="1.3"/>
<path d="M372.0 126.0C371.4 128.3 369.2 135.7 368.5 140.0C367.8 144.3 367.6 147.5 368.0 152.0C368.4 156.5 370.5 164.5 371.0 167.0" stroke="#ee3a36" stroke-width=".6"/>
<g stroke="#f04640" stroke-width=".95">
<path d="M396 181v11M412 181v11"/>
<path d="M398 192L327 278M394 198L326 281M383 226L341 293M381 231L344 296M386 204L372 231"/>
<circle cx="329.500" cy="291.500" r="11.300"/><path d="M321 284Q330 278 339 287M319.500 286Q318 294 322 300M323 301l-4 6M327 302l-4 7"/>
<path d="M411 192L494 261M416 197L497 264M428 224L486 279M426 229L484 283M424 204L440 232"/>
<circle cx="496.500" cy="273.500" r="12.300"/><circle cx="497" cy="274" r="11"/><path d="M500 277l12 13M497 280l10 11M487 266Q496 259 506 266"/>
<path d="M381 288L412 306L437 281M383 290L412 304M414 305L434 283"/>
<path d="M383 322L387.500 411M408 322L412 424M410 322L412 424M437 320L439 405"/>
<path d="M387.500 411L380 432L410 429L411 410M412 425L448 427L439 405M381 433l28-2M414 428l32 1"/>
</g>
<g stroke="#b038c8" stroke-width="1">
<path d="M379.6 150.3C379.8 149.8 380.1 148.2 380.5 147.5C380.9 146.8 381.4 146.2 382.0 146.2C382.6 146.2 383.4 146.8 384.0 147.5C384.6 148.2 385.1 149.8 385.3 150.3"/>
<path d="M417.3 148.7C417.5 148.2 417.9 146.7 418.5 146.0C419.1 145.3 419.9 144.6 420.6 144.6C421.3 144.6 422.1 145.3 422.6 146.0C423.2 146.7 423.7 148.2 423.9 148.7"/>
<ellipse cx="381.200" cy="159" rx="2.800" ry="2.600"/><ellipse cx="421.400" cy="156.900" rx="3.600" ry="3"/>
<path d="M394.3 165.0C394.8 165.3 396.4 166.4 397.5 166.8C398.6 167.2 399.8 167.6 401.0 167.5C402.2 167.4 403.8 166.7 405.0 166.0C406.2 165.3 407.8 163.8 408.3 163.4"/>
<path d="M396.8 166.0C396.9 166.7 397.1 168.8 397.5 170.0C397.9 171.2 398.6 172.5 399.3 173.3C400.0 174.1 400.8 174.7 401.5 175.0C402.2 175.3 402.7 175.5 403.4 175.0C404.1 174.5 404.9 173.2 405.5 172.0C406.1 170.8 406.5 168.2 406.7 167.5"/>
<path d="M399.0 172.5C399.3 172.3 400.2 171.4 401.0 171.3C401.8 171.2 402.9 171.6 403.5 172.0C404.1 172.4 404.3 173.7 404.5 174.0"/>
<path d="M397.600 180L397.600 191L413.200 191L413.200 180M397.600 183.500h15.600"/>
<path d="M398 192L357.500 234.500L370 250.500M400 193.500L360 236M411 192L457.300 227.500L445.200 244.700M410 194L455 229"/>
<path d="M398 192Q388 205 386 222Q388 250 384 270Q380 285 380 303M411 192Q424 204 426 222Q426 250 432 268Q438 282 441 292Q441 297 436 299"/>
<path d="M380 303Q408 310 441 295M380 285Q379 295 380 304"/>
<path d="M386 214Q392 222 403 206M424 214Q414 220 405 206"/>
<path d="M403 193L405 204L398 240M407 193L405 204L404 244M405 204L405 306"/>
<ellipse cx="411.500" cy="240" rx="1" ry="1.600"/><ellipse cx="412" cy="247.500" rx="1.100" ry="2"/>
<path d="M380 316L382 324L409 320L439 321L439 311L409 316L380 316M382 309L381 316M409 308v14M382 307Q384 311 387 310M432 304Q434 308 438 306"/>
<path d="M388 406Q384 401 386 404Q388 408 389 407Q392 401 393 404Q391 408 389 407M389 407L387 414M389 407L391 414M389 408Q400 412 411 408"/>
<path d="M458 157.500l1.500-4 1.500 4M458.600 156h2M463 157.500v-4q2.400.4 0 2l2.200 2M469.600 153.800q-2.400 0-1.200 1.600t-1.200 2.100M472.500 153.800q-1.600 1.600 0 3.600t1.200-3.600zM476 157.500v-3.600l2 3.600v-3.600M481 157.300v.2" stroke-width=".6"/>
</g>
</svg>
<svg class="a" style="left:223px;top:65px;" width="6" height="6" viewBox="0 0 6 6"><circle cx="3" cy="3" r="1.500" fill="none" stroke="#999" stroke-width=".5"/></svg>
<div class="a" style="left:83.6px;top:464.3px;width:83.6px;height:10.5px;background:#ececec;border:1px solid #dadada;border-radius:1px"></div>
<svg class="a" style="left:85.3px;top:465.9px;" width="7" height="7.4" viewBox="0 0 7 7.4"><rect x=".4" y=".4" width="6.2" height="6.6" fill="#223" stroke="#223" stroke-width=".8"/><rect x="1.2" y="1.2" width="4.6" height="4.2" fill="#e8d838"/><path d="M1.2 5.4l2-2.4 1.4 1.4 1.2-1v2z" fill="#3aa84a"/><rect x="1.2" y="1.2" width="2" height="1.6" fill="#4ac0e8"/></svg>
<div class="t" style="left:94.6px;top:466.8px;font-size:5.6px;transform:scaleX(0.955);transform-origin:0 0;">NewCanvas1</div>
<div class="t" style="right:734.0px;top:467.5px;font-size:4.5px">33%</div>
<div class="a" style="left:169.0px;top:464.3px;width:83.6px;height:10.5px;background:#ececec;border:1px solid #dadada;border-radius:1px"></div>
<svg class="a" style="left:170.7px;top:465.9px;" width="7" height="7.4" viewBox="0 0 7 7.4"><rect x=".4" y=".4" width="6.2" height="6.6" fill="#223" stroke="#223" stroke-width=".8"/><rect x="1.2" y="1.2" width="4.6" height="4.2" fill="#e8d838"/><path d="M1.2 5.4l2-2.4 1.4 1.4 1.2-1v2z" fill="#3aa84a"/><rect x="1.2" y="1.2" width="2" height="1.6" fill="#4ac0e8"/></svg>
<div class="t" style="left:180.0px;top:466.8px;font-size:5.6px;transform:scaleX(0.955);transform-origin:0 0;">NewCanvas1</div>
<div class="t" style="right:648.6px;top:467.5px;font-size:4.5px">33%</div>
<div class="a" style="left:254.4px;top:464.3px;width:83.6px;height:10.5px;background:#ececec;border:1px solid #dadada;border-radius:1px"></div>
<svg class="a" style="left:256.1px;top:465.9px;" width="7" height="7.4" viewBox="0 0 7 7.4"><rect x=".4" y=".4" width="6.2" height="6.6" fill="#223" stroke="#223" stroke-width=".8"/><rect x="1.2" y="1.2" width="4.6" height="4.2" fill="#e8d838"/><path d="M1.2 5.4l2-2.4 1.4 1.4 1.2-1v2z" fill="#3aa84a"/><rect x="1.2" y="1.2" width="2" height="1.6" fill="#4ac0e8"/></svg>
<div class="t" style="left:265.4px;top:466.8px;font-size:5.6px;transform:scaleX(0.955);transform-origin:0 0;">NewCanvas1</div>
<div class="t" style="right:563.2px;top:467.5px;font-size:4.5px">25%</div>
<div class="a" style="left:339.80000000000007px;top:464.3px;width:83.6px;height:10.5px;background:#ececec;border:1px solid #dadada;border-radius:1px"></div>
<svg class="a" style="left:341.50000000000006px;top:465.9px;" width="7" height="7.4" viewBox="0 0 7 7.4"><rect x=".4" y=".4" width="6.2" height="6.6" fill="#223" stroke="#223" stroke-width=".8"/><rect x="1.2" y="1.2" width="4.6" height="4.2" fill="#e8d838"/><path d="M1.2 5.4l2-2.4 1.4 1.4 1.2-1v2z" fill="#3aa84a"/><rect x="1.2" y="1.2" width="2" height="1.6" fill="#4ac0e8"/></svg>
<div class="t" style="left:350.80000000000007px;top:466.8px;font-size:5.6px;transform:scaleX(1.141);transform-origin:0 0;">ref...sai2</div>
<div class="t" style="right:477.79999999999995px;top:467.5px;font-size:4.5px">150%</div>
<div class="a" style="left:425.20000000000005px;top:464.3px;width:83.6px;height:10.5px;background:#ececec;border:1px solid #dadada;border-radius:1px"></div>
<svg class="a" style="left:426.90000000000003px;top:465.9px;" width="7" height="7.4" viewBox="0 0 7 7.4"><rect x=".4" y=".4" width="6.2" height="6.6" fill="#223" stroke="#223" stroke-width=".8"/><rect x="1.2" y="1.2" width="4.6" height="4.2" fill="#e8d838"/><path d="M1.2 5.4l2-2.4 1.4 1.4 1.2-1v2z" fill="#3aa84a"/><rect x="1.2" y="1.2" width="2" height="1.6" fill="#4ac0e8"/></svg>
<div class="t" style="left:436.20000000000005px;top:466.8px;font-size:5.6px;transform:scaleX(0.955);transform-origin:0 0;">NewCanvas1</div>
<div class="t" style="right:392.4px;top:467.5px;font-size:4.5px">75%</div>
<div class="a" style="left:510.6px;top:464.3px;width:83.6px;height:10.5px;background:#d8d8ff;border:1px solid #a8a8ea;border-radius:1px"></div>
<svg class="a" style="left:512.3000000000001px;top:465.9px;" width="7" height="7.4" viewBox="0 0 7 7.4"><rect x=".4" y=".4" width="6.2" height="6.6" fill="#223" stroke="#223" stroke-width=".8"/><rect x="1.2" y="1.2" width="4.6" height="4.2" fill="#e8d838"/><path d="M1.2 5.4l2-2.4 1.4 1.4 1.2-1v2z" fill="#3aa84a"/><rect x="1.2" y="1.2" width="2" height="1.6" fill="#4ac0e8"/></svg>
<div class="t" style="left:521.6px;top:466.8px;font-size:5.6px;transform:scaleX(0.955);transform-origin:0 0;">NewCanvas1</div>
<div class="t" style="right:307.0px;top:467.5px;font-size:4.5px">75%</div>
<div class="a" style="left:794px;top:24px;width:11px;height:8.8px;background:#e4e4ff;border:1px solid #a0a0ee;border-radius:1px"></div>
<div class="a" style="left:817.3px;top:24px;width:11px;height:8.8px;background:#e4e4ff;border:1px solid #a0a0ee;border-radius:1px"></div>
<div class="a" style="left:840.7px;top:24px;width:11px;height:8.8px;background:#e4e4ff;border:1px solid #a0a0ee;border-radius:1px"></div>
<svg class="a" style="left:794px;top:24px;" width="11" height="8.8" viewBox="0 0 11 8.8"><defs><linearGradient id="cw" x1="0" y1="0" x2="1" y2="1"><stop offset="0" stop-color="#f33"/><stop offset=".35" stop-color="#3c3"/><stop offset=".7" stop-color="#36f"/><stop offset="1" stop-color="#c3c"/></linearGradient></defs><circle cx="5.5" cy="4.4" r="2.7" fill="none" stroke="url(#cw)" stroke-width="1.3"/></svg>
<svg class="a" style="left:807px;top:24px;" width="9" height="8.8" viewBox="0 0 9 8.8"><path d="M.8 2.4h7.4M.8 4.4h7.4M.8 6.4h7.4" stroke="#111" stroke-width="1.3"/></svg>
<svg class="a" style="left:817.3px;top:24px;" width="11" height="8.8" viewBox="0 0 11 8.8"><path d="M2 2.6h7" stroke="#e33" stroke-width="1.2"/><path d="M2 4.4h7" stroke="#33c" stroke-width="1.2"/><path d="M2 6.2h7" stroke="#111" stroke-width="1.2"/><path d="M5 2.6h4" stroke="#3b3" stroke-width="1.2"/><path d="M6 4.4h3" stroke="#e3e" stroke-width="1.2"/></svg>
<svg class="a" style="left:830px;top:24px;" width="9" height="8.8" viewBox="0 0 9 8.8"><path d="M.8 2.6h7.4M.8 4.4h7.4M.8 6.2h7.4" stroke="#9a9a9a" stroke-width="1.1"/></svg>
<svg class="a" style="left:840.7px;top:24px;" width="11" height="8.8" viewBox="0 0 11 8.8"><defs><linearGradient id="sw" x1="0" x2="1"><stop offset="0" stop-color="#e55"/><stop offset=".3" stop-color="#dd5"/><stop offset=".55" stop-color="#5c5"/><stop offset=".8" stop-color="#55d"/><stop offset="1" stop-color="#c5c"/></linearGradient></defs><rect x="1.6" y="2.2" width="7.8" height="4.8" fill="url(#sw)"/><path d="M3.5 2.2v4.8M5.5 2.2v4.8M7.5 2.2v4.8" stroke="#fff" stroke-width=".4"/></svg>
<div class="a" style="left:854px;top:24.6px;width:8.6px;height:7.8px;background:#fafafa;border:1px solid #d8d8d8;border-radius:1px"></div>
<svg class="a" style="left:854px;top:24.6px;" width="8.6" height="7.8" viewBox="0 0 8.6 7.8"><ellipse cx="4.3" cy="3.9" rx="2" ry="1.6" fill="#333"/><circle cx="5.3" cy="4.4" r=".8" fill="#999"/></svg>
<div class="a" style="left:891.6px;top:24px;width:7.4px;height:7.4px;background:#dcdcdc;border-radius:1px"></div>
<svg class="a" style="left:891.6px;top:24px;" width="7.4" height="7.4" viewBox="0 0 7.4 7.4"><path d="M2.4 3.4h2.4" stroke="#fff" stroke-width=".8"/></svg>
<div class="a" style="left:891px;top:33px;width:9px;height:443px;background:#f3f3f3;"></div>
<div class="a" style="left:803.8px;top:34.6px;width:76.6px;height:76.6px;border-radius:50%;background:conic-gradient(from 1deg,#ff0,#0f0 60deg,#0ff 120deg,#00f 180deg,#f0f 240deg,#f00 300deg,#ff0 360deg);box-shadow:0 0 0 .6px #c8c8d8"></div>
<div class="a" style="left:812.5px;top:43.300000000000004px;width:59.2px;height:59.2px;border-radius:50%;background:#f8f8f8;box-shadow:0 0 0 .6px #d0d0d8"></div>
<div class="a" style="left:821px;top:52.5px;width:41px;height:40px;background:linear-gradient(to bottom,rgba(0,0,0,0),#000),linear-gradient(to right,#fff,#e000ff)"></div>
<svg class="a" style="left:853px;top:60px;" width="6" height="6" viewBox="0 0 6 6"><circle cx="2.7" cy="2.6" r="1.8" fill="none" stroke="#1a5a1a" stroke-width=".9"/><circle cx="2.7" cy="2.6" r=".7" fill="#9c6"/></svg>
<svg class="a" style="left:811px;top:90.5px;" width="6" height="6" viewBox="0 0 6 6"><circle cx="3" cy="2.9" r="1.8" fill="none" stroke="#1a5a1a" stroke-width=".9"/><circle cx="3" cy="2.9" r=".7" fill="#9c6"/></svg>
<div class="a" style="left:793px;top:112.4px;width:97px;height:0.7px;background:#ededed;"></div>
<div class="t" style="left:794px;top:117.10000000000001px;font-size:5.6px;font-weight:bold;color:#333">H</div>
<div class="a" style="left:801px;top:116.9px;width:74.3px;height:4px;background:linear-gradient(to right,#f00,#ff0 17%,#0f0 33%,#0ff 50%,#00f 67%,#f0f 83%,#f00)"></div>
<div class="t" style="left:878px;top:115.9px;font-size:5.9px">293</div>
<svg class="a" style="left:858.7px;top:121.30000000000001px;" width="5" height="3.6" viewBox="0 0 5 3.6"><path d="M2.5 .3L4.6 3.2H.4z" fill="#fff" stroke="#333" stroke-width=".6"/></svg>
<div class="t" style="left:794px;top:128.0px;font-size:5.6px;font-weight:bold;color:#333">S</div>
<div class="a" style="left:801px;top:127.8px;width:74.3px;height:4px;background:linear-gradient(to right,#c2c2c2,#b000c8)"></div>
<div class="t" style="left:878px;top:126.8px;font-size:5.9px">085</div>
<svg class="a" style="left:861.1px;top:132.2px;" width="5" height="3.6" viewBox="0 0 5 3.6"><path d="M2.5 .3L4.6 3.2H.4z" fill="#fff" stroke="#333" stroke-width=".6"/></svg>
<div class="t" style="left:794px;top:138.79999999999998px;font-size:5.6px;font-weight:bold;color:#333">V</div>
<div class="a" style="left:801px;top:138.6px;width:74.3px;height:4px;background:linear-gradient(to right,#000,#e020ff)"></div>
<div class="t" style="left:878px;top:137.6px;font-size:5.9px">076</div>
<svg class="a" style="left:854.4px;top:143.0px;" width="5" height="3.6" viewBox="0 0 5 3.6"><path d="M2.5 .3L4.6 3.2H.4z" fill="#fff" stroke="#333" stroke-width=".6"/></svg>
<div class="a" style="left:793.5px;top:151.8px;width:84.5px;height:67.6px;background:#f0eeee;"></div>
<div class="a" style="left:793.5px;top:187px;width:84.5px;height:32.4px;background-image:linear-gradient(45deg,#e6e2e2 25%,transparent 25%,transparent 75%,#e6e2e2 75%),linear-gradient(45deg,#e6e2e2 25%,transparent 25%,transparent 75%,#e6e2e2 75%);background-size:7px 7px;background-position:0 0,3.5px 3.5px;opacity:.55"></div>
<div class="a" style="left:793.6px;top:151.9px;width:6.5px;height:6.5px;background:#ff0000;"></div>
<div class="a" style="left:800.62px;top:151.9px;width:6.5px;height:6.5px;background:#ffa000;"></div>
<div class="a" style="left:807.64px;top:151.9px;width:6.5px;height:6.5px;background:#ffee00;"></div>
<div class="a" style="left:814.66px;top:151.9px;width:6.5px;height:6.5px;background:#beff00;"></div>
<div class="a" style="left:821.6800000000001px;top:151.9px;width:6.5px;height:6.5px;background:#1eff00;"></div>
<div class="a" style="left:828.7px;top:151.9px;width:6.5px;height:6.5px;background:#00ff96;"></div>
<div class="a" style="left:835.72px;top:151.9px;width:6.5px;height:6.5px;background:#00ffff;"></div>
<div class="a" style="left:842.74px;top:151.9px;width:6.5px;height:6.5px;background:#00beff;"></div>
<div class="a" style="left:849.76px;top:151.9px;width:6.5px;height:6.5px;background:#0000ff;"></div>
<div class="a" style="left:856.78px;top:151.9px;width:6.5px;height:6.5px;background:#6e00ff;"></div>
<div class="a" style="left:863.8px;top:151.9px;width:6.5px;height:6.5px;background:#be00ff;"></div>
<div class="a" style="left:870.82px;top:151.9px;width:6.5px;height:6.5px;background:#ff00ff;"></div>
<div class="a" style="left:793.6px;top:158.94px;width:6.5px;height:6.5px;background:#ffc7c7;"></div>
<div class="a" style="left:800.62px;top:158.94px;width:6.5px;height:6.5px;background:#ffeac7;"></div>
<div class="a" style="left:807.64px;top:158.94px;width:6.5px;height:6.5px;background:#fffbc7;"></div>
<div class="a" style="left:814.66px;top:158.94px;width:6.5px;height:6.5px;background:#f1ffc7;"></div>
<div class="a" style="left:821.6800000000001px;top:158.94px;width:6.5px;height:6.5px;background:#ceffc7;"></div>
<div class="a" style="left:828.7px;top:158.94px;width:6.5px;height:6.5px;background:#c7ffe8;"></div>
<div class="a" style="left:835.72px;top:158.94px;width:6.5px;height:6.5px;background:#c7ffff;"></div>
<div class="a" style="left:842.74px;top:158.94px;width:6.5px;height:6.5px;background:#c7f1ff;"></div>
<div class="a" style="left:849.76px;top:158.94px;width:6.5px;height:6.5px;background:#c7c7ff;"></div>
<div class="a" style="left:856.78px;top:158.94px;width:6.5px;height:6.5px;background:#dfc7ff;"></div>
<div class="a" style="left:863.8px;top:158.94px;width:6.5px;height:6.5px;background:#f1c7ff;"></div>
<div class="a" style="left:870.82px;top:158.94px;width:6.5px;height:6.5px;background:#ffc7ff;"></div>
<div class="a" style="left:793.6px;top:165.98000000000002px;width:6.5px;height:6.5px;background:#990000;"></div>
<div class="a" style="left:800.62px;top:165.98000000000002px;width:6.5px;height:6.5px;background:#996000;"></div>
<div class="a" style="left:807.64px;top:165.98000000000002px;width:6.5px;height:6.5px;background:#998f00;"></div>
<div class="a" style="left:814.66px;top:165.98000000000002px;width:6.5px;height:6.5px;background:#729900;"></div>
<div class="a" style="left:821.6800000000001px;top:165.98000000000002px;width:6.5px;height:6.5px;background:#129900;"></div>
<div class="a" style="left:828.7px;top:165.98000000000002px;width:6.5px;height:6.5px;background:#00995a;"></div>
<div class="a" style="left:835.72px;top:165.98000000000002px;width:6.5px;height:6.5px;background:#009999;"></div>
<div class="a" style="left:842.74px;top:165.98000000000002px;width:6.5px;height:6.5px;background:#007299;"></div>
<div class="a" style="left:849.76px;top:165.98000000000002px;width:6.5px;height:6.5px;background:#000099;"></div>
<div class="a" style="left:856.78px;top:165.98000000000002px;width:6.5px;height:6.5px;background:#420099;"></div>
<div class="a" style="left:863.8px;top:165.98000000000002px;width:6.5px;height:6.5px;background:#720099;"></div>
<div class="a" style="left:870.82px;top:165.98000000000002px;width:6.5px;height:6.5px;background:#990099;"></div>
<div class="a" style="left:793.6px;top:173.02px;width:6.5px;height:6.5px;background:#d89e9e;"></div>
<div class="a" style="left:800.62px;top:173.02px;width:6.5px;height:6.5px;background:#d8c39e;"></div>
<div class="a" style="left:807.64px;top:173.02px;width:6.5px;height:6.5px;background:#d8d49e;"></div>
<div class="a" style="left:814.66px;top:173.02px;width:6.5px;height:6.5px;background:#c9d89e;"></div>
<div class="a" style="left:821.6800000000001px;top:173.02px;width:6.5px;height:6.5px;background:#a5d89e;"></div>
<div class="a" style="left:828.7px;top:173.02px;width:6.5px;height:6.5px;background:#9ed8c0;"></div>
<div class="a" style="left:835.72px;top:173.02px;width:6.5px;height:6.5px;background:#9ed8d8;"></div>
<div class="a" style="left:842.74px;top:173.02px;width:6.5px;height:6.5px;background:#9ec9d8;"></div>
<div class="a" style="left:849.76px;top:173.02px;width:6.5px;height:6.5px;background:#9e9ed8;"></div>
<div class="a" style="left:856.78px;top:173.02px;width:6.5px;height:6.5px;background:#b79ed8;"></div>
<div class="a" style="left:863.8px;top:173.02px;width:6.5px;height:6.5px;background:#c99ed8;"></div>
<div class="a" style="left:870.82px;top:173.02px;width:6.5px;height:6.5px;background:#d89ed8;"></div>
<div class="a" style="left:793.6px;top:180.06px;width:6.5px;height:6.5px;background:#120000;"></div>
<div class="a" style="left:800.62px;top:180.06px;width:6.5px;height:6.5px;background:#120b00;"></div>
<div class="a" style="left:807.64px;top:180.06px;width:6.5px;height:6.5px;background:#121100;"></div>
<div class="a" style="left:814.66px;top:180.06px;width:6.5px;height:6.5px;background:#0d1200;"></div>
<div class="a" style="left:821.6800000000001px;top:180.06px;width:6.5px;height:6.5px;background:#021200;"></div>
<div class="a" style="left:828.7px;top:180.06px;width:6.5px;height:6.5px;background:#00120a;"></div>
<div class="a" style="left:835.72px;top:180.06px;width:6.5px;height:6.5px;background:#001212;"></div>
<div class="a" style="left:842.74px;top:180.06px;width:6.5px;height:6.5px;background:#000d12;"></div>
<div class="a" style="left:849.76px;top:180.06px;width:6.5px;height:6.5px;background:#000012;"></div>
<div class="a" style="left:856.78px;top:180.06px;width:6.5px;height:6.5px;background:#080012;"></div>
<div class="a" style="left:863.8px;top:180.06px;width:6.5px;height:6.5px;background:#0d0012;"></div>
<div class="a" style="left:870.82px;top:180.06px;width:6.5px;height:6.5px;background:#120012;"></div>
<div class="a" style="left:793.6px;top:187.10000000000002px;width:6.5px;height:6.5px;background:#7799cc;"></div>
<div class="a" style="left:800.62px;top:187.10000000000002px;width:6.5px;height:6.5px;background:#3352c4;"></div>
<div class="a" style="left:807.64px;top:187.10000000000002px;width:6.5px;height:6.5px;background:#e2525e;"></div>
<div class="a" style="left:814.66px;top:187.10000000000002px;width:6.5px;height:6.5px;background:#94cc94;"></div>
<div class="a" style="left:821.6800000000001px;top:187.10000000000002px;width:6.5px;height:6.5px;background:#b400cc;"></div>
<div class="a" style="left:793.6px;top:201.18px;width:6.5px;height:6.5px;background:#b8b8b8;"></div>
<div class="a" style="left:793.6px;top:215.26px;width:6.5px;height:4.1px;background:#fbf4f0;"></div>
<div class="a" style="left:800.62px;top:215.26px;width:6.5px;height:4.1px;background:#8a6a6a;"></div>
<div class="a" style="left:807.64px;top:215.26px;width:6.5px;height:4.1px;background:#ee2222;"></div>
<div class="a" style="left:814.66px;top:215.26px;width:6.5px;height:4.1px;background:#f4c4c0;"></div>
<div class="a" style="left:821.6800000000001px;top:215.26px;width:6.5px;height:4.1px;background:#4a78ff;"></div>
<div class="a" style="left:828.7px;top:215.26px;width:6.5px;height:4.1px;background:#e4c0c8;"></div>
<div class="a" style="left:835.72px;top:215.26px;width:6.5px;height:4.1px;background:#ecc4e0;"></div>
<div class="a" style="left:842.74px;top:215.26px;width:6.5px;height:4.1px;background:#f0d0c0;"></div>
<div class="a" style="left:849.76px;top:215.26px;width:6.5px;height:4.1px;background:#703030;"></div>
<div class="a" style="left:856.78px;top:215.26px;width:6.5px;height:4.1px;background:#e6e0dc;"></div>
<div class="a" style="left:881.8px;top:151.8px;width:7.6px;height:67.6px;background:#ececec;"></div>
<div class="a" style="left:882px;top:152px;width:7.2px;height:6.8px;background:#8d8d8d;border-radius:1px"></div>
<svg class="a" style="left:882px;top:152px;" width="7.2" height="6.8" viewBox="0 0 7.2 6.8"><path d="M2.4 4.1l1.2-1.6 1.2 1.6z" fill="#fff"/></svg>
<div class="a" style="left:882px;top:212.5px;width:7.2px;height:6.8px;background:#8d8d8d;border-radius:1px"></div>
<svg class="a" style="left:882px;top:212.5px;" width="7.2" height="6.8" viewBox="0 0 7.2 6.8"><path d="M2.4 2.7l1.2 1.6 1.2-1.6z" fill="#fff"/></svg>
<div class="a" style="left:882px;top:160px;width:7.2px;height:35px;background:#999;border-radius:1px"></div>
<div class="a" style="left:838px;top:221px;width:7px;height:1.5px;background:#666;border-radius:1px"></div>
<div class="a" style="left:793.3px;top:225.3px;width:12px;height:12.2px;background:#f8f8f8;border:.5px solid #f1f1f1"></div>
<div class="a" style="left:805.3px;top:225.3px;width:12px;height:12.2px;background:#f8f8f8;border:.5px solid #f1f1f1"></div>
<div class="a" style="left:817.3px;top:225.3px;width:12px;height:12.2px;background:#f8f8f8;border:.5px solid #f1f1f1"></div>
<div class="a" style="left:829.3px;top:225.3px;width:12px;height:12.2px;background:#f8f8f8;border:.5px solid #f1f1f1"></div>
<div class="a" style="left:841.3px;top:225.3px;width:12px;height:12.2px;background:#f8f8f8;border:.5px solid #f1f1f1"></div>
<div class="a" style="left:793.3px;top:237.5px;width:12px;height:12.2px;background:#f8f8f8;border:.5px solid #f1f1f1"></div>
<div class="a" style="left:805.3px;top:237.5px;width:12px;height:12.2px;background:#f8f8f8;border:.5px solid #f1f1f1"></div>
<div class="a" style="left:817.3px;top:237.5px;width:12px;height:12.2px;background:#f8f8f8;border:.5px solid #f1f1f1"></div>
<div class="a" style="left:829.3px;top:237.5px;width:12px;height:12.2px;background:#f8f8f8;border:.5px solid #f1f1f1"></div>
<div class="a" style="left:841.3px;top:237.5px;width:12px;height:12.2px;background:#f8f8f8;border:.5px solid #f1f1f1"></div>
<svg class="a" style="left:793.3px;top:225.3px;" width="60" height="24.4" viewBox="0 0 60 24.4"><g fill="none" stroke="#222" stroke-width=".8">
<rect x="1.5" y="2" width="8.2" height="7.6" fill="#fff" stroke="#aaa"/>
<path d="M13.6 4.2q3.6-2.4 6.4-.4t-3 3.4q1.6.4 1.4 2.2" stroke="#888"/>
<path d="M25.6 9.6l4.2-4.2" stroke-width="1.2"/><path d="M30.6 4.4l1.4-1.6" stroke="#888"/>
<path d="M38 3.4h4.6v4.6H38z" fill="#999" stroke="#888"/><circle cx="40.6" cy="4.4" r="2.2" fill="#bbb" stroke="#888"/>
<path d="M2.600 18.400h6M5.600 15.400v6" stroke-width=".8"/><path d="M5.600 14.200l1.100 1.500h-2.200zM5.600 22.600l1.100-1.500h-2.200zM1.400 18.400l1.500-1.100v2.200zM9.800 18.400l-1.500-1.100v2.200z" fill="#222" stroke="none"/>
<circle cx="16.6" cy="17" r="2.4"/><path d="M18.4 18.8l3 3" stroke-width="1.3"/>
<path d="M27.4 21.4a3.2 3.2 0 114.8 0" stroke-width="1.1"/><path d="M26.2 21.6h2M31.4 21.6h2" stroke-width="1"/>
<path d="M39 16.4q2.6-2 4.6.4l1.4 2.6q.4 2.4-2 2.8t-3.6-2.2z" stroke="#999"/><path d="M38.4 15.6l2 2.6" stroke="#999"/>
<path d="M51.6 21.8l4-4.4" stroke="#999" stroke-width="1"/><path d="M55 18l2.6-2.8" stroke-width="1.8"/>
</g></svg>
<div class="t" style="left:843.6px;top:225.6px;font-family:'Liberation Serif',serif;font-size:11.5px;color:#1a1a1a">T</div>
<div class="a" style="left:876.8px;top:236.5px;width:12.4px;height:11.8px;background:#a9a9a9;"></div>
<div class="a" style="left:866.7px;top:226px;width:12.3px;height:11.8px;background:#ab0bc8;"></div>
<svg class="a" style="left:882px;top:226.5px;" width="7" height="6" viewBox="0 0 7 6"><path d="M1.2 1.2l4.2 3.6" stroke="#111" stroke-width="1"/><path d="M.6.4l2.6.4-2 1.8zM6.2 5.6l-2.6-.4 2-1.8z" fill="#111"/></svg>
<div class="a" style="left:867.8px;top:242px;width:5px;height:5px;background:#fff;border:.7px solid #aaa;border-radius:1px"></div>
<div class="a" style="left:793.7px;top:252.0px;width:21.4px;height:15.3px;background:#e0e0ff;border:1px solid #a8a8ee;border-radius:1px"></div>
<div class="t" style="left:795.1px;top:253.6px;font-size:5.3px;transform:scaleX(0.831);transform-origin:0 0;">Pencil</div>
<div class="a" style="left:815.25px;top:252.0px;width:21.4px;height:15.3px;background:#fcfcfc;border:.5px solid #ececec"></div>
<div class="t" style="left:816.65px;top:253.6px;font-size:5.3px;transform:scaleX(0.855);transform-origin:0 0;">sketch</div>
<div class="a" style="left:836.8000000000001px;top:252.0px;width:21.4px;height:15.3px;background:#fcfcfc;border:.5px solid #ececec"></div>
<div class="t" style="left:838.2px;top:253.6px;font-size:5.3px;transform:scaleX(0.807);transform-origin:0 0;">Eraser</div>
<div class="a" style="left:858.35px;top:252.0px;width:21.4px;height:15.3px;background:#fcfcfc;border:.5px solid #ececec"></div>
<div class="t" style="left:859.75px;top:253.6px;font-size:5.3px;transform:scaleX(0.923);transform-origin:0 0;">Water ...</div>
<div class="a" style="left:793.7px;top:267.5px;width:21.4px;height:11.8px;background:#fcfcfc;border:.5px solid #ececec"></div>
<div class="t" style="left:795.1px;top:269.8px;font-size:5.3px;transform:scaleX(0.889);transform-origin:0 0;">Bucket</div>
<div class="a" style="left:815.25px;top:267.5px;width:21.4px;height:11.8px;background:#fcfcfc;border:.5px solid #ececec"></div>
<div class="t" style="left:816.65px;top:269.8px;font-size:5.3px;transform:scaleX(0.856);transform-origin:0 0;">AirBrush</div>
<div class="a" style="left:836.8000000000001px;top:267.5px;width:21.4px;height:11.8px;background:#fcfcfc;border:.5px solid #ececec"></div>
<div class="t" style="left:838.2px;top:269.8px;font-size:5.3px;transform:scaleX(0.784);transform-origin:0 0;">SelPen</div>
<div class="a" style="left:858.35px;top:267.5px;width:21.4px;height:11.8px;background:#fcfcfc;border:.5px solid #ececec"></div>
<div class="t" style="left:859.75px;top:269.8px;font-size:5.3px;transform:scaleX(0.769);transform-origin:0 0;">SelErs</div>
<div class="t" style="left:794.8px;top:259.5px;"></div>
<div class="t" style="left:816.5px;top:260.5px;font-size:4.6px">1</div>
<svg class="a" style="left:793.7px;top:252px;" width="86" height="15.5" viewBox="0 0 86 15.5"><g fill="none" stroke="#222">
<path d="M13 13l6.400-6" stroke-width="1.150"/><path d="M12.6 13.4l1-.4" stroke="#777" stroke-width=".8"/>
<path d="M35 13l6.400-6" stroke-width="1.150"/>
<path d="M56.6 11.2l4.4-4 2.4 2.4-4.4 4z" fill="#bbb" stroke="#777" stroke-width=".7"/>
<path d="M78 12.400l6.600-7.400" stroke-width="1.300"/><circle cx="83.4" cy="12.6" r="1.4" stroke="#888" stroke-width=".6"/>
</g></svg>
<svg class="a" style="left:793.7px;top:267.5px;" width="86" height="11.5" viewBox="0 0 86 11.5"><g fill="none" stroke="#777" stroke-width=".7">
<path d="M14.6 11l3-3 2 2"/><path d="M38.6 11l3.4-2.4"/><path d="M59 11.4l1.6-2.6M61.6 11.4l1.4-2.6"/><path d="M81 11.4l1.6-2.6M83.6 11.4l1.4-2.6"/>
</g></svg>
<div class="a" style="left:882px;top:252px;width:7.6px;height:27.2px;background:#ececec;"></div>
<div class="a" style="left:882.2px;top:252.2px;width:7.2px;height:6.4px;background:#8d8d8d;border-radius:1px"></div>
<svg class="a" style="left:882.2px;top:252.2px;" width="7.2" height="6.4" viewBox="0 0 7.2 6.4"><path d="M2.4 3.9l1.2-1.6 1.2 1.6z" fill="#fff"/></svg>
<div class="a" style="left:882.2px;top:259px;width:7.2px;height:2.6px;background:#999;border-radius:1px"></div>
<div class="a" style="left:882.2px;top:272px;width:7.2px;height:6.8px;background:#8d8d8d;border-radius:1px"></div>
<svg class="a" style="left:882.2px;top:272px;" width="7.2" height="6.8" viewBox="0 0 7.2 6.8"><path d="M2.4 2.7l1.2 1.6 1.2-1.6z" fill="#fff"/></svg>
<div class="a" style="left:838px;top:280.8px;width:7px;height:1.4px;background:#666;border-radius:1px"></div>
<div class="a" style="left:794.7px;top:283.3px;width:43px;height:8.6px;background:#fff;border:1px solid #cfcfcf;border-radius:1px"></div>
<div class="t" style="left:797px;top:285.2px;font-size:5.5px;transform:scaleX(0.953);transform-origin:0 0;">Normal</div>
<div class="a" style="left:830.6px;top:284.4px;width:6.2px;height:6.4px;background:#8d8d8d;border-radius:1px"></div>
<svg class="a" style="left:830.6px;top:284.4px;" width="6.2" height="6.4" viewBox="0 0 6.2 6.4"><path d="M1.8 2.5h2.6L3.1 4.3z" fill="#fff"/></svg>
<div class="a" style="left:840.8px;top:283.3px;width:47.8px;height:8.6px;background:#fafafa;border:1px solid #dedede;border-radius:1px"></div>
<div class="a" style="left:878.6px;top:283.6px;width:9.8px;height:8px;background:#dcdcff;border:1px solid #a8a8ee;border-radius:1px"></div>
<svg class="a" style="left:840.8px;top:283.3px;" width="48" height="8.6" viewBox="0 0 48 8.6"><g fill="#111"><path d="M2.4 6.6L5.4 2.4 8.4 6.6z"/><path d="M11.6 6.6Q12 2.6 15 2.6T18.4 6.6z"/><path d="M21.2 6.6Q21.2 2.6 24.6 2.6T28 6.6z"/><path d="M30.8 6.6V3.2q0-.6.6-.6h5.6q.6 0 .6.6v3.4z"/><rect x="40.2" y="2.6" width="6.8" height="4"/></g></svg>
<div class="t" style="left:794px;top:296.3px;font-size:5.7px;transform:scaleX(0.936);transform-origin:0 0;">Brush Size</div>
<div class="a" style="left:832.4px;top:295.3px;width:6.8px;height:6.8px;background:#8d8d8d;border-radius:1px"></div>
<svg class="a" style="left:832.4px;top:295.3px;" width="6.8" height="6.8" viewBox="0 0 6.8 6.8"><path d="M2.1 2.7h2.6L3.4 4.5z" fill="#fff"/></svg>
<div class="a" style="left:840.6px;top:295px;width:48px;height:7.4px;background:#ececec;border:1px solid #d4d4d4;border-radius:1px"></div>
<div class="a" style="left:841.2px;top:295.6px;width:30px;height:6.2px;background:#c6c6c6;"></div>
<div class="t" style="left:842.3px;top:296.8px;font-size:4.8px;color:#444">x0.1</div>
<div class="t" style="right:12.5px;top:296.2px;">9.0</div>
<div class="t" style="left:794px;top:304.9px;font-size:5.7px;transform:scaleX(0.910);transform-origin:0 0;">Min Size</div>
<div class="a" style="left:832.4px;top:303.8px;width:6.8px;height:6.8px;background:#fff;border:1px solid #b8b8b8;border-radius:1px"></div>
<svg class="a" style="left:832.4px;top:303.8px;" width="6.8" height="6.8" viewBox="0 0 6.8 6.8"><path d="M1.6 3.4l1.4 1.6 2.4-3.2" fill="none" stroke="#111" stroke-width="1"/></svg>
<div class="a" style="left:840.6px;top:303.6px;width:39.6px;height:7.2px;background:#fff;border:1px solid #d8d8d8;border-radius:1px"></div>
<div class="t" style="right:22px;top:304.8px;">0%</div>
<div class="t" style="left:794px;top:314.3px;font-size:5.7px;transform:scaleX(0.989);transform-origin:0 0;">Density</div>
<div class="a" style="left:840.6px;top:313.2px;width:48px;height:7.2px;background:#c9c9c9;border-radius:1px"></div>
<div class="a" style="left:840.6px;top:313.2px;width:30px;height:3.6px;background-image:linear-gradient(90deg,#bdbdbd 50%,#d2d2d2 50%);background-size:3.6px 3.6px;opacity:.8"></div>
<div class="t" style="right:12.5px;top:314.2px;">100</div>
<div class="t" style="left:794px;top:322.9px;font-size:5.7px;transform:scaleX(0.974);transform-origin:0 0;">Min Density</div>
<div class="a" style="left:832.4px;top:322px;width:6.8px;height:6.8px;background:#fff;border:1px solid #d0d0d0;border-radius:1px"></div>
<div class="a" style="left:840.6px;top:322.2px;width:39.6px;height:6.6px;background:#f1f1f1;border-radius:1px"></div>
<div class="a" style="left:841px;top:322.6px;width:26px;height:5.8px;background:#e4e4e4;"></div>
<div class="t" style="right:22px;top:323px;color:#d0d0d0">0%</div>
<svg class="a" style="left:794px;top:332.6px;" width="3" height="5" viewBox="0 0 3 5"><path d="M.2 .3L2.6 2.5.2 4.7z" fill="#8a2a10"/></svg>
<div class="a" style="left:798.5px;top:331.3px;width:58.4px;height:8.6px;background:#fff;border:1px solid #cfcfcf;border-radius:1px"></div>
<div class="t" style="left:801px;top:333.1px;font-size:5.7px;transform:scaleX(0.992);transform-origin:0 0;">[ Simple Circle ]</div>
<div class="a" style="left:849.6px;top:332.40000000000003px;width:6.3px;height:6.4px;background:#8d8d8d;border-radius:1px"></div>
<svg class="a" style="left:849.6px;top:332.40000000000003px;" width="6.3" height="6.4" viewBox="0 0 6.3 6.4"><path d="M1.8 2.5h2.6L3.1 4.3z" fill="#fff"/></svg>
<div class="a" style="left:859px;top:332.1px;width:29.5px;height:7px;background:#f2f2f2;border-radius:1px"></div>
<div class="a" style="left:859.5px;top:332.7px;width:14px;height:5.8px;background:#e0e0e0;"></div>
<svg class="a" style="left:794px;top:343.3px;" width="3" height="5" viewBox="0 0 3 5"><path d="M.2 .3L2.6 2.5.2 4.7z" fill="#8a2a10"/></svg>
<div class="a" style="left:798.5px;top:342px;width:58.4px;height:8.6px;background:#fff;border:1px solid #cfcfcf;border-radius:1px"></div>
<div class="t" style="left:801px;top:343.8px;font-size:5.7px;transform:scaleX(1.104);transform-origin:0 0;">[ No Texture ]</div>
<div class="a" style="left:849.6px;top:343.1px;width:6.3px;height:6.4px;background:#8d8d8d;border-radius:1px"></div>
<svg class="a" style="left:849.6px;top:343.1px;" width="6.3" height="6.4" viewBox="0 0 6.3 6.4"><path d="M1.8 2.5h2.6L3.1 4.3z" fill="#fff"/></svg>
<div class="a" style="left:859px;top:342.8px;width:29.5px;height:7px;background:#f2f2f2;border-radius:1px"></div>
<div class="a" style="left:859.5px;top:343.4px;width:14px;height:5.8px;background:#e0e0e0;"></div>
<div class="t" style="right:13px;top:333px;color:#d6d6d6">50</div>
<div class="t" style="right:13px;top:343.7px;color:#d6d6d6">95</div>
<svg class="a" style="left:794px;top:355.3px;" width="3" height="5" viewBox="0 0 3 5"><path d="M.2 .3L2.6 2.5.2 4.7z" fill="#8a2a10"/></svg>
<div class="t" style="left:798px;top:354.9px;font-size:5.7px;transform:scaleX(0.941);transform-origin:0 0;color:#b5542f">Miscellaneous</div>
<div class="a" style="left:794px;top:363px;width:87.2px;height:112.6px;background:#fdfdfd;border:1px solid #e4e4e4"></div>
<div class="a" style="left:794.5px;top:379.6px;width:86.2px;height:0.6px;background:#f0f0f0;"></div>
<div class="a" style="left:794.5px;top:395.90000000000003px;width:86.2px;height:0.6px;background:#f0f0f0;"></div>
<div class="a" style="left:794.5px;top:412.20000000000005px;width:86.2px;height:0.6px;background:#f0f0f0;"></div>
<div class="a" style="left:794.5px;top:428.5px;width:86.2px;height:0.6px;background:#f0f0f0;"></div>
<div class="a" style="left:794.5px;top:444.8px;width:86.2px;height:0.6px;background:#f0f0f0;"></div>
<div class="a" style="left:794.5px;top:461.1px;width:86.2px;height:0.6px;background:#f0f0f0;"></div>
<div class="a" style="left:811.55px;top:363.5px;width:0.6px;height:111.6px;background:#f0f0f0;"></div>
<div class="a" style="left:828.8px;top:363.5px;width:0.6px;height:111.6px;background:#f0f0f0;"></div>
<div class="a" style="left:846.05px;top:363.5px;width:0.6px;height:111.6px;background:#f0f0f0;"></div>
<div class="a" style="left:863.3px;top:363.5px;width:0.6px;height:111.6px;background:#f0f0f0;"></div>
<div class="a" style="left:863.4px;top:396px;width:17.2px;height:16.4px;background:#e2e2ff;border:1px solid #a8a8ee;border-radius:1px"></div>
<div class="t" style="left:794.92px;top:374.90px;width:16px;text-align:center;font-size:4.8px;color:#1c1c1c">0.6</div>
<div class="t" style="left:812.17px;top:374.90px;width:16px;text-align:center;font-size:4.8px;color:#1c1c1c">0.8</div>
<div class="t" style="left:829.42px;top:374.90px;width:16px;text-align:center;font-size:4.8px;color:#1c1c1c">1</div>
<div class="t" style="left:846.67px;top:374.90px;width:16px;text-align:center;font-size:4.8px;color:#1c1c1c">1.5</div>
<div class="t" style="left:863.92px;top:374.90px;width:16px;text-align:center;font-size:4.8px;color:#1c1c1c">2</div>
<div class="t" style="left:794.92px;top:391.20px;width:16px;text-align:center;font-size:4.8px;color:#1c1c1c">2.3</div>
<div class="t" style="left:812.17px;top:391.20px;width:16px;text-align:center;font-size:4.8px;color:#1c1c1c">2.6</div>
<div class="t" style="left:829.42px;top:391.20px;width:16px;text-align:center;font-size:4.8px;color:#1c1c1c">3</div>
<div class="t" style="left:846.67px;top:391.20px;width:16px;text-align:center;font-size:4.8px;color:#1c1c1c">3.5</div>
<div class="t" style="left:863.92px;top:391.20px;width:16px;text-align:center;font-size:4.8px;color:#1c1c1c">4</div>
<div class="t" style="left:794.92px;top:407.50px;width:16px;text-align:center;font-size:4.8px;color:#1c1c1c">5</div>
<div class="t" style="left:812.17px;top:407.50px;width:16px;text-align:center;font-size:4.8px;color:#1c1c1c">6</div>
<div class="t" style="left:829.42px;top:407.50px;width:16px;text-align:center;font-size:4.8px;color:#1c1c1c">7</div>
<div class="t" style="left:846.67px;top:407.50px;width:16px;text-align:center;font-size:4.8px;color:#1c1c1c">8</div>
<div class="t" style="left:863.92px;top:407.50px;width:16px;text-align:center;font-size:4.8px;color:#1c1c1c">9</div>
<div class="t" style="left:794.92px;top:423.80px;width:16px;text-align:center;font-size:4.8px;color:#1c1c1c">10</div>
<div class="t" style="left:812.17px;top:423.80px;width:16px;text-align:center;font-size:4.8px;color:#1c1c1c">12</div>
<div class="t" style="left:829.42px;top:423.80px;width:16px;text-align:center;font-size:4.8px;color:#1c1c1c">14</div>
<div class="t" style="left:846.67px;top:423.80px;width:16px;text-align:center;font-size:4.8px;color:#1c1c1c">16</div>
<div class="t" style="left:863.92px;top:423.80px;width:16px;text-align:center;font-size:4.8px;color:#1c1c1c">20</div>
<div class="t" style="left:794.92px;top:440.10px;width:16px;text-align:center;font-size:4.8px;color:#1c1c1c">25</div>
<div class="t" style="left:812.17px;top:440.10px;width:16px;text-align:center;font-size:4.8px;color:#1c1c1c">30</div>
<div class="t" style="left:829.42px;top:440.10px;width:16px;text-align:center;font-size:4.8px;color:#1c1c1c">35</div>
<div class="t" style="left:846.67px;top:440.10px;width:16px;text-align:center;font-size:4.8px;color:#1c1c1c">40</div>
<div class="t" style="left:863.92px;top:440.10px;width:16px;text-align:center;font-size:4.8px;color:#1c1c1c">50</div>
<div class="t" style="left:794.92px;top:456.40px;width:16px;text-align:center;font-size:4.8px;color:#1c1c1c">60</div>
<div class="t" style="left:812.17px;top:456.40px;width:16px;text-align:center;font-size:4.8px;color:#1c1c1c">70</div>
<div class="t" style="left:829.42px;top:456.40px;width:16px;text-align:center;font-size:4.8px;color:#1c1c1c">80</div>
<div class="t" style="left:846.67px;top:456.40px;width:16px;text-align:center;font-size:4.8px;color:#1c1c1c">100</div>
<div class="t" style="left:863.92px;top:456.40px;width:16px;text-align:center;font-size:4.8px;color:#1c1c1c">120</div>
<div class="t" style="left:794.92px;top:472.70px;width:16px;text-align:center;font-size:4.8px;color:#1c1c1c">160</div>
<div class="t" style="left:812.17px;top:472.70px;width:16px;text-align:center;font-size:4.8px;color:#1c1c1c">200</div>
<div class="t" style="left:829.42px;top:472.70px;width:16px;text-align:center;font-size:4.8px;color:#1c1c1c">250</div>
<div class="t" style="left:846.67px;top:472.70px;width:16px;text-align:center;font-size:4.8px;color:#1c1c1c">300</div>
<div class="t" style="left:863.92px;top:472.70px;width:16px;text-align:center;font-size:4.8px;color:#1c1c1c">350</div>
<svg class="a" style="left:0;top:0" width="900" height="476" viewBox="0 0 900 476" fill="#000"><circle cx="802.92" cy="369.70" r="0.30"/><circle cx="820.17" cy="369.70" r="0.35"/><circle cx="837.42" cy="369.70" r="0.40"/><circle cx="854.67" cy="369.70" r="0.50"/><circle cx="871.92" cy="369.70" r="0.65"/><circle cx="802.92" cy="386.00" r="0.70"/><circle cx="820.17" cy="386.00" r="0.75"/><circle cx="837.42" cy="386.00" r="0.85"/><circle cx="854.67" cy="386.00" r="1.00"/><circle cx="871.92" cy="386.00" r="1.10"/><circle cx="802.92" cy="402.30" r="1.25"/><circle cx="820.17" cy="402.30" r="1.45"/><circle cx="837.42" cy="402.30" r="1.65"/><circle cx="854.67" cy="402.30" r="1.90"/><circle cx="871.92" cy="402.30" r="2.10"/><circle cx="802.92" cy="418.60" r="2.30"/><circle cx="820.17" cy="418.60" r="2.70"/><circle cx="837.42" cy="418.60" r="3.15"/><circle cx="854.67" cy="418.60" r="3.65"/><circle cx="871.92" cy="418.60" r="4.50"/><circle cx="802.92" cy="435.00" r="4.65"/><circle cx="820.17" cy="435.00" r="4.65"/><circle cx="837.42" cy="435.00" r="4.65"/><circle cx="854.67" cy="435.00" r="4.65"/><circle cx="871.92" cy="435.00" r="4.65"/><circle cx="802.92" cy="451.30" r="4.65"/><circle cx="820.17" cy="451.30" r="4.65"/><circle cx="837.42" cy="451.30" r="4.65"/><circle cx="854.67" cy="451.30" r="4.65"/><circle cx="871.92" cy="451.30" r="4.65"/><circle cx="802.92" cy="467.60" r="4.65"/><circle cx="820.17" cy="467.60" r="4.65"/><circle cx="837.42" cy="467.60" r="4.65"/><circle cx="854.67" cy="467.60" r="4.65"/><circle cx="871.92" cy="467.60" r="4.65"/></svg>
<div class="a" style="left:793.2px;top:475.3px;width:89px;height:12px;background:#f8f8f8;"></div>
<div class="a" style="left:792.8px;top:34px;width:0.8px;height:441px;background:#dde2ec;"></div>
<div class="a" style="left:881.8px;top:363px;width:7.8px;height:112.6px;background:#ececec;"></div>
<div class="a" style="left:882px;top:363.2px;width:7.4px;height:6.8px;background:#8d8d8d;border-radius:1px"></div>
<svg class="a" style="left:882px;top:363.2px;" width="7.4" height="6.8" viewBox="0 0 7.4 6.8"><path d="M2.5 4.1l1.2-1.6 1.2 1.6z" fill="#fff"/></svg>
<div class="a" style="left:882px;top:370.4px;width:7.4px;height:65.4px;background:#999;border-radius:1px"></div>
<div class="a" style="left:882px;top:467.6px;width:7.4px;height:6.8px;background:#8d8d8d;border-radius:1px"></div>
<svg class="a" style="left:882px;top:467.6px;" width="7.4" height="6.8" viewBox="0 0 7.4 6.8"><path d="M2.5 2.7l1.2 1.6 1.2-1.6z" fill="#fff"/></svg>
<div class="a" style="left:892px;top:468px;width:7px;height:6.6px;background:#dcdcdc;border-radius:1px"></div>
<div class="t" style="left:699.3px;top:478.8px;font-size:5.7px;transform:scaleX(0.965);transform-origin:0 0;">Memory Usage</div>
<div class="a" style="left:738.9px;top:477.8px;width:57.4px;height:7.2px;background:#fbfbfb;border:1px solid #dcdcdc"></div>
<div class="a" style="left:739.4px;top:478.3px;width:13.6px;height:6.2px;background:#2fdc8c;"></div>
<div class="a" style="left:753px;top:478.3px;width:3.2px;height:6.2px;background:#4a62dc;"></div>
<div class="t" style="left:741px;top:479px;font-size:5.6px;color:#111">22% (00%)</div>
<div class="t" style="left:800.9px;top:478.8px;font-size:5.7px;transform:scaleX(0.944);transform-origin:0 0;">Drive Space</div>
<div class="a" style="left:833px;top:477.8px;width:56.6px;height:7.2px;background:#fbfbfb;border:1px solid #dcdcdc"></div>
<div class="a" style="left:833.5px;top:478.3px;width:42.6px;height:6.2px;background:#38b8f0;"></div>
<div class="t" style="left:835.4px;top:479px;font-size:5.6px;color:#111">76%</div>
<div class="a" style="left:720px;top:440px;width:14px;height:14px;overflow:hidden"><div class="t" style="left:2px;top:2.5px;font-size:10.5px;color:#c6c6c6">Ativar o Windows</div></div>
<div class="t" style="left:721.5px;top:456.3px;font-size:7.1px;color:rgba(140,150,168,.33)">Acesse Configura&ccedil;&otilde;es para ativar o Windows.</div>
</body></html>
